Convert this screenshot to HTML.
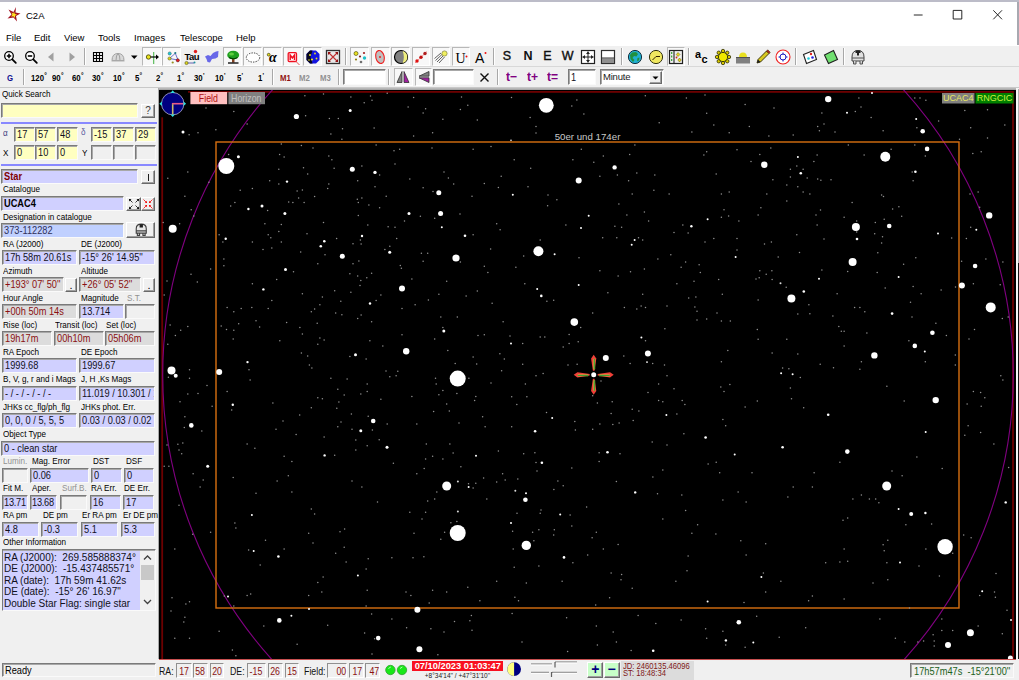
<!DOCTYPE html>
<html><head><meta charset="utf-8"><title>C2A</title>
<style>
*{box-sizing:border-box;margin:0;padding:0}
html,body{width:1019px;height:680px;overflow:hidden;background:#f0f0f0}
body{font-family:"Liberation Sans",sans-serif;font-size:11px;color:#000;position:relative}
.a{position:absolute}
#title{left:0;top:0;width:1019px;height:45px;background:#fff}
#topb{left:0;top:0;width:1019px;height:2.3px;background:#bcbcc8}
#menu span{position:absolute;top:30px;font-size:9.5px;line-height:15px;color:#000;white-space:nowrap}
.tb{left:0;width:1019px;background:#f0f0f0}
.l{position:absolute;font-size:9px;line-height:11px;white-space:nowrap;color:#000;transform:scaleX(.9);transform-origin:0 0}
.g{color:#909090}
.f{position:absolute;height:15px;border:1px solid;border-color:#7a7a7a #fafafa #fafafa #7a7a7a;box-shadow:inset 1px 1px 0 #a8a8a8;background:#d0d0ff;font-size:11px;line-height:13px;padding-left:2px;white-space:nowrap;overflow:hidden;color:#101020}
.f>span{display:inline-block;transform:scaleX(.84);transform-origin:0 0}
.y{background:#ffffc0}
.e{background:#f0f0f0}
.d{background:#dcdcdc;color:#8a1010}
.b{position:absolute;border:1px solid;border-color:#fff #6a6a6a #6a6a6a #fff;box-shadow:inset -1px -1px 0 #a0a0a0;background:#f0f0f0;text-align:center;font-size:11px;line-height:12px}
.p{position:absolute;top:47px;height:19px;background:#f8f8f8;border:1px solid;border-color:#b8b8b8 #fff #fff #b8b8b8}
.sep{position:absolute;width:2px;border-left:1px solid #a8a8a8;border-right:1px solid #fff}
.z{position:absolute;font-weight:bold;font-size:8.4px;line-height:12px;top:72px;white-space:nowrap;transform:scaleX(.93);transform-origin:0 0}
.z sup{font-size:7px;position:relative;top:-3.2px;vertical-align:baseline;line-height:0;margin-left:0.3px}
.sf{position:absolute;top:663px;height:15px;border:1px solid;border-color:#909090 #fff #fff #909090;font-size:11px;line-height:14px;color:#8a1010;text-align:center;background:#f0f0f0;white-space:nowrap}
.sf>span{display:inline-block;transform:scaleX(.8);transform-origin:50% 0}
.sl{position:absolute;top:664px;font-size:11px;line-height:14px;color:#101010;transform:scaleX(.8);transform-origin:0 0;white-space:nowrap}
svg{position:absolute;overflow:visible}
</style></head><body>
<!-- title bar -->
<div id="title" class="a"></div>
<div id="topb" class="a"></div>
<svg style="left:5px;top:6px" width="18" height="18" viewBox="0 0 18 18"><path d="M11 1 L10.5 6.5 L15.5 7.5 L11 10 L12 15.5 L8.5 11.5 L2.5 12.5 L6.5 8.5 L3.5 3.5 L8.5 6 Z" fill="#a01020"/><path d="M9 5.5 L9.8 8 L12 8.6 L10 9.8 L10 12 L8.4 10.2 L6 10.6 L7.4 8.8 L6.4 6.6 L8.4 7.6Z" fill="#ffe820"/></svg>
<div class="a" style="left:26px;top:8px;font-size:9.5px;line-height:15px">C2A</div>
<svg style="left:913px;top:8px" width="100" height="16" viewBox="0 0 100 16"><path d="M0.8 7H9.6 M40.2 2.4H48.8V11H40.2Z M80.3 2.3L89 11.3M89 2.3L80.3 11.3" stroke="#101010" fill="none" stroke-width="0.9"/></svg><div class="a" style="left:1017px;top:2px;width:2px;height:86px;background:#a8a8b0"></div>
<div id="menu">
<span style="left:6px">File</span><span style="left:34px">Edit</span><span style="left:64px">View</span><span style="left:98px">Tools</span><span style="left:134px">Images</span><span style="left:180px">Telescope</span><span style="left:236px">Help</span>
</div>
<!-- toolbars -->
<div class="a tb" style="top:45px;height:22px;border-top:1px solid #fff"></div>
<div class="a tb" style="top:66px;height:21px;border-top:1px solid #d8d8d8"></div>
<div class="a" style="left:0;top:86.5px;width:1019px;height:3px;background:linear-gradient(#d0d0d0,#a0a0a0)"></div>
<div class="p" style="left:142px;width:19.5px"></div>
<div class="p" style="left:162.2px;width:19.100000000000023px"></div>
<div class="p" style="left:222.5px;width:19.099999999999994px"></div>
<div class="p" style="left:243px;width:18.69999999999999px"></div>
<div class="p" style="left:263px;width:18.80000000000001px"></div>
<div class="p" style="left:283px;width:19px"></div>
<div class="p" style="left:303px;width:19px"></div>
<div class="p" style="left:350px;width:19.399999999999977px"></div>
<div class="p" style="left:370.9px;width:18.700000000000045px"></div>
<div class="p" style="left:391px;width:19px"></div>
<div class="p" style="left:411.7px;width:18.5px"></div>
<div class="p" style="left:431.8px;width:18.5px"></div>
<div class="p" style="left:451.8px;width:18.30000000000001px"></div>
<div class="p" style="left:666.5px;width:18.5px"></div>
<svg style="left:2.3000000000000007px;top:48.5px" width="16" height="16" viewBox="0 0 16 16"><circle cx="7" cy="7" r="4.3" fill="#fff" stroke="#000" stroke-width="1.3"/><path d="M10.3 10.3L13.8 13.8" stroke="#000" stroke-width="1.8" stroke-linecap="round"/><path d="M4.8 7H9.2M7 4.8V9.2" stroke="#000" stroke-width="1.5"/></svg>
<svg style="left:22.7px;top:48.5px" width="16" height="16" viewBox="0 0 16 16"><circle cx="7" cy="7" r="4.3" fill="#fff" stroke="#000" stroke-width="1.3"/><path d="M10.3 10.3L13.8 13.8" stroke="#000" stroke-width="1.8" stroke-linecap="round"/><path d="M4.8 7H9.2" stroke="#000" stroke-width="1.6"/></svg>
<svg style="left:42.5px;top:48.5px" width="16" height="16" viewBox="0 0 16 16"><path d="M10.5 3.5V12.5L5 8Z" fill="#a0a0a0"/></svg>
<svg style="left:63.5px;top:48.5px" width="16" height="16" viewBox="0 0 16 16"><path d="M5.5 3.5V12.5L11 8Z" fill="#a0a0a0"/></svg>
<div class="sep" style="left:83.6px;top:48px;height:17px"></div>
<svg style="left:90.0px;top:48.5px" width="16" height="16" viewBox="0 0 16 16"><path d="M3.5 3V13M6.5 3V13M9.5 3V13M12.5 3V13M3 3.5H13M3 6.5H13M3 9.5H13M3 12.5H13" stroke="#000" stroke-width="1.1"/></svg>
<svg style="left:110.0px;top:48.5px" width="16" height="16" viewBox="0 0 16 16"><path d="M2 11.5Q2 4.5 8 4.5Q14 4.5 14 11.5Z" fill="#d8d8d8" stroke="#a0a0a0"/><path d="M6 11.5Q6 6 8 4.5Q10 6 10 11.5" fill="none" stroke="#a0a0a0"/><path d="M1.5 12H14.5" stroke="#b0b0b0"/></svg>
<svg style="left:126.30000000000001px;top:48.5px" width="16" height="16" viewBox="0 0 16 16"><path d="M5 6.5H11.5L8.25 10Z" fill="#000"/></svg>
<svg style="left:145.0px;top:48.5px" width="16" height="16" viewBox="0 0 16 16"><path d="M8.7 3V15" stroke="#50b850" stroke-width="1.1"/><path d="M5 8H13" stroke="#000" stroke-width="1.2"/><path d="M11 5.5L14 8L11 10.5Z" fill="#000"/><circle cx="3.5" cy="8" r="2.2" fill="#e8e020" stroke="#404000" stroke-width="0.8"/></svg>
<svg style="left:165.5px;top:48.5px" width="16" height="16" viewBox="0 0 16 16"><path d="M3.5 9.5L9.3 4.3L12 11L3.5 9.5" stroke="#6060c8" stroke-width="0.9" fill="none"/><circle cx="3.7" cy="4.5" r="1.6" fill="#20c8d8" stroke="#104040" stroke-width="0.4"/><circle cx="9.3" cy="4" r="1.1" fill="#207888"/><circle cx="3.5" cy="9.5" r="1.6" fill="#d8d020" stroke="#303000" stroke-width="0.4"/><circle cx="11.8" cy="11.3" r="1.6" fill="#e02020" stroke="#300000" stroke-width="0.4"/><circle cx="6.7" cy="13.5" r="1.1" fill="#909020"/></svg>
<svg style="left:184.0px;top:48.5px" width="16" height="16" viewBox="0 0 16 16"><text x="0.5" y="11" font-family="Liberation Sans" font-weight="bold" font-size="9.5" fill="#000" letter-spacing="-0.6">Tau</text><path d="M2 14H10" stroke="#4040a0" stroke-width="0.8"/><circle cx="11.5" cy="2.5" r="1.7" fill="#e02020"/><circle cx="2.5" cy="14" r="1.6" fill="#d8d020" stroke="#404000" stroke-width="0.5"/><circle cx="10.5" cy="13.5" r="1" fill="#2090a0"/></svg>
<svg style="left:204.0px;top:48.5px" width="16" height="16" viewBox="0 0 16 16"><path d="M1 7.5L4 6L6.5 7L9 4L12 2.5L14.5 2L14 8L11.5 9.5L8 10L6 13.5L3.5 13L2.5 10Z" fill="#6868e8"/></svg>
<svg style="left:224.7px;top:48.5px" width="16" height="16" viewBox="0 0 16 16"><path d="M7 9H9.5V13.5H7Z" fill="#804020"/><path d="M3 14H13.5" stroke="#000" stroke-width="1.3"/><ellipse cx="8.2" cy="6" rx="6" ry="4.3" fill="#20a020"/><ellipse cx="6.5" cy="5" rx="2.5" ry="1.5" fill="#60d040"/><path d="M4 8.5Q8 11 12.5 8.5" stroke="#004000" stroke-width="1.2" fill="none"/></svg>
<svg style="left:245.0px;top:48.5px" width="16" height="16" viewBox="0 0 16 16"><ellipse cx="8" cy="8.5" rx="6.7" ry="4.6" fill="#fff" stroke="#202020" stroke-width="0.9" stroke-dasharray="1.3 1.2"/></svg>
<svg style="left:265.0px;top:48.5px" width="16" height="16" viewBox="0 0 16 16"><text x="4" y="13.2" font-family="Liberation Serif" font-style="italic" font-weight="bold" font-size="14" fill="#000">&#945;</text><circle cx="3.7" cy="5.7" r="1.4" fill="#e8e020" stroke="#202000" stroke-width="0.6"/></svg>
<svg style="left:284.5px;top:48.5px" width="16" height="16" viewBox="0 0 16 16"><rect x="3.2" y="3.7" width="8.3" height="8.8" rx="1" fill="#fff" stroke="#f01020" stroke-width="1.3"/><path d="M5.2 11V6L7.35 9L9.5 6V11" stroke="#f01020" stroke-width="1.5" fill="none"/><path d="M11 12.5L14.5 16" stroke="#e85050" stroke-width="1"/></svg>
<svg style="left:305.3px;top:48.5px" width="16" height="16" viewBox="0 0 16 16"><path d="M5 1.5H11L14.5 5V11L11 14.5H5L1.5 11V5Z" fill="#1414e0"/><path d="M5 1.5H7.5L5.5 8L7.5 14.5H5L1.5 11V5Z" fill="#080820"/><circle cx="5" cy="6" r="1" fill="#e8e020"/><circle cx="10" cy="4.5" r="0.9" fill="#e8e020"/><circle cx="7" cy="10.5" r="1.1" fill="#e8e020"/><circle cx="11.5" cy="9.5" r="0.9" fill="#e8e020"/><circle cx="4" cy="11" r="0.8" fill="#e8e020"/></svg>
<svg style="left:324.6px;top:48.5px" width="16" height="16" viewBox="0 0 16 16"><rect x="1.5" y="1.5" width="13" height="13" fill="#e8e8e8" stroke="#303030" stroke-width="1.3"/><path d="M3.5 3.5L12.5 12.5M12.5 3.5L3.5 12.5" stroke="#c03030" stroke-width="1.1"/><path d="M3 3H6L3 6ZM13 3H10L13 6ZM3 13H6L3 10ZM13 13H10L13 10Z" fill="#901010"/></svg>
<div class="sep" style="left:344.6px;top:48px;height:17px"></div>
<svg style="left:351.8px;top:48.5px" width="16" height="16" viewBox="0 0 16 16"><circle cx="4" cy="4.5" r="2" fill="#e8e020" stroke="#404000" stroke-width="0.6"/><circle cx="12" cy="4" r="1.1" fill="#a02020"/><circle cx="8" cy="7.5" r="1.1" fill="#802020"/><circle cx="12.5" cy="9" r="1.7" fill="#20c0c8"/><circle cx="4" cy="10.5" r="1.1" fill="#908010"/><circle cx="9" cy="13" r="1.3" fill="#707070"/></svg>
<svg style="left:372.2px;top:48.5px" width="16" height="16" viewBox="0 0 16 16"><ellipse cx="8" cy="8" rx="4.2" ry="6.6" transform="rotate(-14 8 8)" fill="#c0c0c0" stroke="#f02020" stroke-width="1.1"/><circle cx="8" cy="8" r="1" fill="#f02020"/></svg>
<svg style="left:392.5px;top:48.5px" width="16" height="16" viewBox="0 0 16 16"><circle cx="8" cy="8" r="6.5" fill="#808080" stroke="#000" stroke-width="1.2"/><path d="M9.6 1.9A6.3 6.3 0 0 1 9.6 14.1A16 16 0 0 0 9.6 1.9Z" fill="#f0f080"/></svg>
<svg style="left:413.0px;top:48.5px" width="16" height="16" viewBox="0 0 16 16"><path d="M2 14L14 2.5" stroke="#f08080" stroke-width="0.9"/><circle cx="4" cy="12" r="1.7" fill="#e01010"/><circle cx="8" cy="8.2" r="1.7" fill="#c01010"/><circle cx="12" cy="4.5" r="1.7" fill="#b02020"/></svg>
<svg style="left:433.0px;top:48.5px" width="16" height="16" viewBox="0 0 16 16"><path d="M8 4L1.5 9.5M9.5 5L2.5 11.5M10.5 6.5L4 13M11.5 8L6 14" stroke="#505050" stroke-width="0.9"/><circle cx="11.5" cy="4.5" r="2.6" fill="#f0f060" stroke="#808040" stroke-width="0.7"/></svg>
<svg style="left:453.0px;top:48.5px" width="16" height="16" viewBox="0 0 16 16"><text x="2.5" y="13.5" font-family="Liberation Serif" font-size="14" fill="#000">U</text><circle cx="13.5" cy="7.5" r="1" fill="#f01010"/></svg>
<svg style="left:473.0px;top:48.5px" width="16" height="16" viewBox="0 0 16 16"><text x="2" y="13.5" font-family="Liberation Sans" font-size="14" fill="#000">A</text><circle cx="12.5" cy="4" r="1" fill="#f01010"/></svg>
<div class="sep" style="left:493px;top:48px;height:17px"></div>
<div class="a" style="left:497px;top:49px;width:20px;text-align:center;font-size:12.5px;line-height:15px;-webkit-text-stroke:0.4px #101010;color:#101010">S</div>
<div class="a" style="left:518px;top:49px;width:20px;text-align:center;font-size:12.5px;line-height:15px;font-weight:bold;color:#101010">N</div>
<div class="a" style="left:537.5px;top:49px;width:20px;text-align:center;font-size:12.5px;line-height:15px;-webkit-text-stroke:0.4px #101010;color:#101010">E</div>
<div class="a" style="left:557.7px;top:49px;width:20px;text-align:center;font-size:12.5px;line-height:15px;-webkit-text-stroke:0.4px #101010;color:#101010">W</div>
<svg style="left:579.7px;top:48.5px" width="16" height="16" viewBox="0 0 16 16"><rect x="1.5" y="1.5" width="13" height="13" fill="#fff" stroke="#202020" stroke-width="1.2"/><path d="M8 2.5V13.5M2.5 8H13.5" stroke="#202020" stroke-width="1"/><path d="M8 2.5L6 5H10ZM8 13.5L6 11H10ZM2.5 8L5 6V10ZM13.5 8L11 6V10Z" fill="#202020"/></svg>
<svg style="left:599.7px;top:48.5px" width="16" height="16" viewBox="0 0 16 16"><rect x="1.5" y="1.5" width="13" height="13" fill="#fff" stroke="#303030" stroke-width="1.2"/><rect x="2" y="9.5" width="12" height="4.5" fill="#909090"/><path d="M2 9H14" stroke="#303030" stroke-width="1"/></svg>
<div class="sep" style="left:620.7px;top:48px;height:17px"></div>
<svg style="left:627.0px;top:48.5px" width="16" height="16" viewBox="0 0 16 16"><circle cx="8" cy="8" r="6.6" fill="#20b0d0" stroke="#103040" stroke-width="1"/><path d="M5 3.5L9 3L11 5L9.5 7.5L7 7L5.5 9L7.5 11L6 13L3.5 10L3 6Z" fill="#209040"/><path d="M10.5 9L12.5 8.5L12 11.5L10 12Z" fill="#209040"/></svg>
<svg style="left:648.0px;top:48.5px" width="16" height="16" viewBox="0 0 16 16"><circle cx="8" cy="8" r="6.6" fill="#f0e860" stroke="#303010" stroke-width="1"/><path d="M4.5 11L8 7.5H12" stroke="#302000" stroke-width="1" fill="none"/></svg>
<svg style="left:668.0px;top:48.5px" width="16" height="16" viewBox="0 0 16 16"><rect x="1.5" y="1.5" width="13" height="13" fill="#f0f0f0" stroke="#202020" stroke-width="1.2"/><path d="M6 1.5V14.5" stroke="#202020" stroke-width="1.1"/><path d="M3.7 3V13" stroke="#30a030" stroke-width="1.2" stroke-dasharray="2 1.5"/><path d="M10 3.5L12 5.5L10 7.5L8.3 5.5ZM11.5 9L13.3 11L11.5 13L9.8 11Z" fill="#e8d820" stroke="#605000" stroke-width="0.5"/><circle cx="8.5" cy="8.5" r="0.9" fill="#d02020"/></svg>
<div class="sep" style="left:688.3px;top:48px;height:17px"></div>
<svg style="left:694.0px;top:48.5px" width="16" height="16" viewBox="0 0 16 16"><text x="1" y="9" font-family="Liberation Sans" font-weight="bold" font-size="11" fill="#000">a</text><text x="7.5" y="14" font-family="Liberation Sans" font-weight="bold" font-size="11" fill="#000">c</text></svg>
<svg style="left:715.3px;top:48.5px" width="16" height="16" viewBox="0 0 16 16"><circle cx="14.00" cy="8.00" r="1.7" fill="#d8c800" stroke="#303000" stroke-width="0.8"/><circle cx="12.24" cy="12.24" r="1.7" fill="#d8c800" stroke="#303000" stroke-width="0.8"/><circle cx="8.00" cy="14.00" r="1.7" fill="#d8c800" stroke="#303000" stroke-width="0.8"/><circle cx="3.76" cy="12.24" r="1.7" fill="#d8c800" stroke="#303000" stroke-width="0.8"/><circle cx="2.00" cy="8.00" r="1.7" fill="#d8c800" stroke="#303000" stroke-width="0.8"/><circle cx="3.76" cy="3.76" r="1.7" fill="#d8c800" stroke="#303000" stroke-width="0.8"/><circle cx="8.00" cy="2.00" r="1.7" fill="#d8c800" stroke="#303000" stroke-width="0.8"/><circle cx="12.24" cy="3.76" r="1.7" fill="#d8c800" stroke="#303000" stroke-width="0.8"/><circle cx="8" cy="8" r="4.6" fill="#f0e800" stroke="#303000" stroke-width="0.9"/></svg>
<svg style="left:735.0px;top:48.5px" width="16" height="16" viewBox="0 0 16 16"><path d="M4 8.5Q4 3.5 8 3.5Q12 3.5 12 8.5Z" fill="#e8e020"/><rect x="1" y="8.5" width="14" height="6" fill="#808080"/><path d="M1 8.5H15" stroke="#505050"/></svg>
<svg style="left:755.0px;top:48.5px" width="16" height="16" viewBox="0 0 16 16"><path d="M2 14L3 10.5L11.5 2L14 4.5L5.5 13Z" fill="#d8c820" stroke="#302800" stroke-width="0.9"/><path d="M11.5 2L12.7 0.8L15.2 3.3L14 4.5Z" fill="#c02020" stroke="#302800" stroke-width="0.6"/><path d="M2 14L3 10.5L5.5 13Z" fill="#202020"/></svg>
<svg style="left:775.4px;top:48.5px" width="16" height="16" viewBox="0 0 16 16"><circle cx="8" cy="8" r="7" fill="#fff" stroke="#f02020" stroke-width="1.1"/><circle cx="8" cy="8" r="3" fill="none" stroke="#2020c0" stroke-width="1"/><path d="M8 3.5V5.5M8 10.5V12.5M3.5 8H5.5M10.5 8H12.5" stroke="#2020c0" stroke-width="1"/></svg>
<div class="sep" style="left:795.4px;top:48px;height:17px"></div>
<svg style="left:802.0px;top:48.5px" width="16" height="16" viewBox="0 0 16 16"><path d="M1.5 5.5L11.5 1.5L14.5 10.5L4.5 14.5Z" fill="#fff" stroke="#202020" stroke-width="1.1"/><circle cx="6.5" cy="9.5" r="1.3" fill="#20d0e0"/><circle cx="10.5" cy="8.5" r="1.3" fill="#2020e0"/><circle cx="9" cy="5" r="1.2" fill="#e02020"/></svg>
<svg style="left:822.5px;top:48.5px" width="16" height="16" viewBox="0 0 16 16"><path d="M1.5 6L10.5 1.5L14.5 10.5L5.5 14.5Z" fill="#70e070" stroke="#202020" stroke-width="1.1"/></svg>
<div class="sep" style="left:842.5px;top:48px;height:17px"></div>
<svg style="left:849.6px;top:48.5px" width="16" height="16" viewBox="0 0 16 16"><path d="M2 8Q2 1.5 8 1.5Q14 1.5 14 8V12H2Z" fill="#e0e0e0" stroke="#404040" stroke-width="1"/><rect x="5.5" y="1.5" width="5" height="2.5" fill="#202020"/><rect x="7" y="3" width="2" height="3.5" fill="#202020"/><path d="M2 9H14M3.5 12V15H6V12M10 12V15H12.5V12" stroke="#505050" fill="#d0d0d0"/></svg>
<div class="z" style="left:6.5px;color:#101090">G</div>
<div class="sep" style="left:23.2px;top:69px;height:16px"></div>
<div class="z" style="left:30.5px">120<sup>&deg;</sup></div>
<div class="z" style="left:51.5px">90<sup>&deg;</sup></div>
<div class="z" style="left:71.5px">60<sup>&deg;</sup></div>
<div class="z" style="left:92px">30<sup>&deg;</sup></div>
<div class="z" style="left:112.5px">10<sup>&deg;</sup></div>
<div class="z" style="left:135px">5<sup>&deg;</sup></div>
<div class="z" style="left:155.5px">2<sup>&deg;</sup></div>
<div class="z" style="left:176.5px">1<sup>&deg;</sup></div>
<div class="z" style="left:193.5px">30<sup>'</sup></div>
<div class="z" style="left:214.5px">10<sup>'</sup></div>
<div class="z" style="left:236.5px">5<sup>'</sup></div>
<div class="z" style="left:257.5px">1<sup>'</sup></div>
<div class="sep" style="left:271.6px;top:69px;height:16px"></div>
<div class="z" style="left:279.5px;color:#901010;letter-spacing:0">M1</div>
<div class="z" style="left:299px;color:#909090;letter-spacing:0">M2</div>
<div class="z" style="left:319.5px;color:#909090;letter-spacing:0">M3</div>
<div class="sep" style="left:338.2px;top:69px;height:16px"></div>
<div class="f" style="left:343px;top:69px;width:43px;height:16px;background:#fff"></div>
<div class="sep" style="left:388.3px;top:69px;height:16px"></div>
<div class="p" style="left:393.5px;width:19px;top:68px;height:18px"></div>
<div class="p" style="left:414.5px;width:17.5px;top:68px;height:18px"></div>
<svg style="left:396px;top:70px" width="14" height="14" viewBox="0 0 14 14"><path d="M6 1.5V12.5H1Z" fill="#808080" stroke="#303030" stroke-width="0.8"/><path d="M8 1.5V12.5H13Z" fill="#a020a0" stroke="#303030" stroke-width="0.8"/></svg>
<svg style="left:417px;top:70px" width="14" height="14" viewBox="0 0 14 14"><path d="M12 6.2H2L12 1.5Z" fill="#808080" stroke="#303030" stroke-width="0.8"/><path d="M12 7.8H2L12 12.5Z" fill="#a020a0" stroke="#303030" stroke-width="0.8"/></svg>
<div class="f" style="left:433px;top:69px;width:41px;height:16px;background:#fff"></div>
<svg style="left:479px;top:72px" width="11" height="11" viewBox="0 0 11 11"><path d="M1.5 1.5L9.5 9.5M9.5 1.5L1.5 9.5" stroke="#101010" stroke-width="1.4"/></svg>
<div class="sep" style="left:497.4px;top:69px;height:16px"></div>
<div class="z" style="left:506px;color:#800080;font-size:13px;top:70px;line-height:14px;letter-spacing:0">t&minus;</div>
<div class="z" style="left:526.5px;color:#800080;font-size:13px;top:70px;line-height:14px;letter-spacing:0">t+</div>
<div class="z" style="left:546.5px;color:#800080;font-size:13px;top:70px;line-height:14px;letter-spacing:0">t=</div>
<div class="f" style="left:568px;top:69px;width:28px;height:16px;background:#fff;font-size:11px;line-height:14px"><span>1</span></div>
<div class="f" style="left:600px;top:69px;width:64px;height:16px;background:#fff;font-size:9.5px;line-height:14px;letter-spacing:-0.2px;color:#202020">Minute</div>
<div class="b" style="left:649px;top:71px;width:13px;height:13px"><svg style="left:2px;top:4px" width="7" height="4" viewBox="0 0 7 4"><path d="M0.5 0.5H6.5L3.5 3.5Z" fill="#000"/></svg></div>
<div class="a" style="left:0;top:659px;width:1019px;height:21px;background:#f0f0f0"></div>
<div class="a" style="left:159px;top:658.7px;width:858px;height:1.3px;background:#c85050"></div>
<!-- left panel -->
<div class="a" style="left:0;top:88px;width:158px;height:572px;background:#f0f0f0"></div>
<div class="a" style="left:157.5px;top:88px;width:1.5px;height:571px;background:#a8a8a8"></div>
<div class="l " style="left:2px;top:89px">Quick Search</div>
<div class="f y" style="left:1px;top:103px;width:137px;height:15px;"><span></span></div>
<div class="b" style="left:141px;top:104px;width:14px;height:14px;color:#404040;font-size:10px;line-height:11px">?</div>
<div class="a" style="left:1px;top:122px;width:156px;height:2px;background:#8888ff"></div>
<div class="l" style="left:3px;top:128px;font-size:9px;color:#404080">&alpha;</div>
<div class="f y" style="left:14px;top:127px;width:21px;height:15px;"><span>17</span></div>
<div class="f y" style="left:35px;top:127px;width:21px;height:15px;"><span>57</span></div>
<div class="f y" style="left:57px;top:127px;width:21px;height:15px;"><span>48</span></div>
<div class="l" style="left:81px;top:127px;font-size:9px;color:#6060a0">&delta;</div>
<div class="f y" style="left:91px;top:127px;width:21px;height:15px;"><span>-15</span></div>
<div class="f y" style="left:113px;top:127px;width:21px;height:15px;"><span>37</span></div>
<div class="f y" style="left:135px;top:127px;width:21px;height:15px;"><span>29</span></div>
<div class="l " style="left:3px;top:148px">X</div>
<div class="f y" style="left:14px;top:145px;width:21px;height:15px;"><span>0</span></div>
<div class="f y" style="left:35px;top:145px;width:21px;height:15px;"><span>10</span></div>
<div class="f y" style="left:57px;top:145px;width:21px;height:15px;"><span>0</span></div>
<div class="l " style="left:82px;top:148px">Y</div>
<div class="f e" style="left:91px;top:145px;width:21px;height:15px;"><span></span></div>
<div class="f e" style="left:113px;top:145px;width:21px;height:15px;"><span></span></div>
<div class="f e" style="left:135px;top:145px;width:21px;height:15px;"><span></span></div>
<div class="a" style="left:1px;top:164px;width:156px;height:2px;background:#8888ff"></div>
<div class="f " style="left:1px;top:169px;width:137px;height:15px;font-weight:bold;color:#800000"><span>Star</span></div>
<div class="b" style="left:141px;top:170px;width:14px;height:14px;"><div style="position:absolute;left:5.5px;top:2.5px;width:1px;height:7px;background:#202020"></div></div>
<div class="l " style="left:3px;top:184px">Catalogue</div>
<div class="f " style="left:1px;top:196px;width:123px;height:15px;font-weight:bold;color:#000"><span>UCAC4</span></div>
<div class="b" style="left:126px;top:197px;width:15px;height:14px;"><svg style="left:1px;top:0" width="12" height="12" viewBox="0 0 12 12"><path d="M1.5 1.5L4.5 4.5M10.5 1.5L7.5 4.5M1.5 10.5L4.5 7.5M10.5 10.5L7.5 7.5" stroke="#202020" stroke-width="0.9" fill="none"/><path d="M1 1H3.5L1 3.5ZM11 1H8.5L11 3.5ZM1 11H3.5L1 8.5ZM11 11H8.5L11 8.5Z" fill="#101010"/></svg></div>
<div class="b" style="left:141px;top:197px;width:14px;height:14px;"><svg style="left:0;top:0" width="12" height="12" viewBox="0 0 12 12"><path d="M1.5 1.5L4.5 4.5M10.5 1.5L7.5 4.5M1.5 10.5L4.5 7.5M10.5 10.5L7.5 7.5" stroke="#f02020" stroke-width="0.9" fill="none"/><path d="M5 5H2.8L5 2.8ZM7 5H9.2L7 2.8ZM5 7H2.8L5 9.2ZM7 7H9.2L7 9.2Z" fill="#f01010"/></svg></div>
<div class="l " style="left:3px;top:212px">Designation in catalogue</div>
<div class="f " style="left:1px;top:223px;width:123px;height:15px;background:#c0d0ff;color:#303058"><span>373-112282</span></div>
<div class="b" style="left:126px;top:222px;width:29px;height:16px;"><svg style="left:7px;top:0px" width="14.5" height="13.5" viewBox="0 0 13 12"><path d="M2 5Q2 1 6.5 1Q11 1 11 5V9H2Z" fill="#e8e8e8" stroke="#404040"/><rect x="5" y="1" width="3" height="3" fill="#202020"/><path d="M2 7H11M3 9V11H5V9M8 9V11H10V9" stroke="#404040" fill="none"/></svg></div>
<div class="l " style="left:3px;top:239px">RA (J2000)</div>
<div class="l " style="left:81px;top:239px">DE (J2000)</div>
<div class="f " style="left:2px;top:250px;width:75px;height:15px;"><span>17h 58m 20.61s</span></div>
<div class="f " style="left:79px;top:250px;width:76px;height:15px;"><span>-15&deg; 26' 14.95''</span></div>
<div class="l " style="left:3px;top:266px">Azimuth</div>
<div class="l " style="left:81px;top:266px">Altitude</div>
<div class="f d" style="left:2px;top:277px;width:62px;height:15px;"><span>+193&deg; 07' 50''</span></div>
<div class="b" style="left:65px;top:278px;width:12px;height:14px;">.</div>
<div class="f d" style="left:79px;top:277px;width:62px;height:15px;"><span>+26&deg; 05' 52''</span></div>
<div class="b" style="left:143px;top:278px;width:12px;height:14px;">.</div>
<div class="l " style="left:3px;top:293px">Hour Angle</div>
<div class="l " style="left:81px;top:293px">Magnitude</div>
<div class="l g" style="left:127px;top:293px">S.T.</div>
<div class="f d" style="left:2px;top:304px;width:75px;height:15px;"><span>+00h 50m 14s</span></div>
<div class="f " style="left:79px;top:304px;width:45px;height:15px;"><span>13.714</span></div>
<div class="f e" style="left:125px;top:304px;width:30px;height:15px;"><span></span></div>
<div class="l " style="left:3px;top:320px">Rise (loc)</div>
<div class="l " style="left:55px;top:320px">Transit (loc)</div>
<div class="l " style="left:106px;top:320px">Set (loc)</div>
<div class="f d" style="left:2px;top:331px;width:50px;height:15px;"><span>19h17m</span></div>
<div class="f d" style="left:54px;top:331px;width:50px;height:15px;"><span>00h10m</span></div>
<div class="f d" style="left:105px;top:331px;width:50px;height:15px;"><span>05h06m</span></div>
<div class="l " style="left:3px;top:347px">RA Epoch</div>
<div class="l " style="left:81px;top:347px">DE Epoch</div>
<div class="f " style="left:2px;top:358px;width:75px;height:15px;"><span>1999.68</span></div>
<div class="f " style="left:79px;top:358px;width:76px;height:15px;"><span>1999.67</span></div>
<div class="l " style="left:3px;top:374px">B, V, g, r and i Mags</div>
<div class="l " style="left:81px;top:374px">J, H ,Ks Mags</div>
<div class="f " style="left:2px;top:386px;width:75px;height:15px;"><span>- / - / - / - / -</span></div>
<div class="f " style="left:79px;top:386px;width:76px;height:15px;"><span>11.019 / 10.301 / 10.1</span></div>
<div class="l " style="left:3px;top:402px">JHKs cc_flg/ph_flg</div>
<div class="l " style="left:81px;top:402px">JHKs phot. Err.</div>
<div class="f " style="left:2px;top:413px;width:75px;height:15px;"><span>0, 0, 0 / 5, 5, 5</span></div>
<div class="f " style="left:79px;top:413px;width:76px;height:15px;"><span>0.03 / 0.03 / 0.02</span></div>
<div class="l " style="left:3px;top:429px">Object Type</div>
<div class="f " style="left:1px;top:441px;width:154px;height:15px;"><span>0 - clean star</span></div>
<div class="l g" style="left:3px;top:456px">Lumin.</div>
<div class="l " style="left:32px;top:456px">Mag. Error</div>
<div class="l " style="left:93px;top:456px">DST</div>
<div class="l " style="left:126px;top:456px">DSF</div>
<div class="f e" style="left:2px;top:468px;width:26px;height:15px;"><span></span></div>
<div class="f " style="left:30px;top:468px;width:59px;height:15px;"><span>0.06</span></div>
<div class="f " style="left:91px;top:468px;width:31px;height:15px;"><span>0</span></div>
<div class="f " style="left:124px;top:468px;width:30px;height:15px;"><span>0</span></div>
<div class="l " style="left:3px;top:483px">Fit M.</div>
<div class="l " style="left:32px;top:483px">Aper.</div>
<div class="l g" style="left:62px;top:483px">Surf.B.</div>
<div class="l " style="left:91px;top:483px">RA Err.</div>
<div class="l " style="left:124px;top:483px">DE Err.</div>
<div class="f " style="left:2px;top:495px;width:26px;height:15px;padding-left:1px;letter-spacing:-0.3px"><span>13.71</span></div>
<div class="f " style="left:30px;top:495px;width:27px;height:15px;padding-left:1px;letter-spacing:-0.3px"><span>13.68</span></div>
<div class="f e" style="left:60px;top:495px;width:27px;height:15px;"><span></span></div>
<div class="f " style="left:90px;top:495px;width:31px;height:15px;"><span>16</span></div>
<div class="f " style="left:123px;top:495px;width:31px;height:15px;"><span>17</span></div>
<div class="l " style="left:3px;top:510px">RA pm</div>
<div class="l " style="left:43px;top:510px">DE pm</div>
<div class="l " style="left:82px;top:510px">Er RA pm</div>
<div class="l " style="left:123px;top:510px">Er DE pm</div>
<div class="f " style="left:2px;top:522px;width:37px;height:15px;"><span>4.8</span></div>
<div class="f " style="left:41px;top:522px;width:37px;height:15px;"><span>-0.3</span></div>
<div class="f " style="left:81px;top:522px;width:37px;height:15px;"><span>5.1</span></div>
<div class="f " style="left:121px;top:522px;width:34px;height:15px;"><span>5.3</span></div>
<div class="l " style="left:3px;top:537px">Other Information</div>
<div class="f" style="left:2px;top:549px;width:154px;height:62px;background:#f0f0f0"></div>
<div class="a" style="left:3px;top:551px;width:137px;height:59px;background:#d0d0ff;font-size:10px;line-height:11.45px;padding-left:1px;padding-top:1px;color:#101020;white-space:pre;overflow:hidden">RA (J2000):  269.585888374&deg;
DE (J2000):  -15.437485571&deg;
RA (date):  17h 59m 41.62s
DE (date):  -15&deg; 26' 16.97"
Double Star Flag: single star</div>
<div class="a" style="left:141px;top:565px;width:13px;height:15px;background:#c8c8c8"></div>
<svg style="left:143px;top:554px" width="9" height="52" viewBox="0 0 9 52"><path d="M1 5.5L4.5 2L8 5.5M1 46L4.5 49.5L8 46" stroke="#404040" stroke-width="1.3" fill="none"/></svg>
<div class="f" style="left:2px;top:663px;width:154px;height:14px;background:#f0f0f0;font-size:11px;line-height:12px;color:#000"><span>Ready</span></div>
<!-- map -->
<div class="a" style="left:159px;top:89.5px;width:856.7px;height:569.5px;background:#000;overflow:hidden">
<svg style="left:-159px;top:-89.5px" width="1019" height="680" viewBox="0 0 1019 680">
<rect x="162.2" y="91.9" width="850.8" height="568" fill="none" stroke="#6c0000" stroke-width="1.8"/>
<circle cx="588" cy="375" r="425.3" fill="none" stroke="#800080" stroke-width="1.1"/>
<rect x="216" y="142" width="743" height="466" fill="none" stroke="#d87010" stroke-width="1.4"/>
<g fill="#909090"><circle cx="206.0" cy="108.0" r="0.75"/><circle cx="233.8" cy="111.6" r="0.75"/><circle cx="304.9" cy="95.8" r="0.75"/><circle cx="323.5" cy="93.9" r="0.75"/><circle cx="350.9" cy="96.9" r="0.75"/><circle cx="370.5" cy="96.0" r="0.75"/><circle cx="364.2" cy="102.8" r="0.75"/><circle cx="372.0" cy="100.2" r="0.75"/><circle cx="305.6" cy="115.8" r="0.75"/><circle cx="329.4" cy="118.6" r="0.75"/><circle cx="338.3" cy="118.6" r="0.75"/><circle cx="247.1" cy="123.9" r="0.75"/><circle cx="215.9" cy="129.8" r="0.75"/><circle cx="198.0" cy="132.7" r="0.75"/><circle cx="189.1" cy="134.8" r="0.75"/><circle cx="342.5" cy="128.7" r="0.75"/><circle cx="330.9" cy="134.0" r="0.75"/><circle cx="341.9" cy="139.3" r="0.75"/><circle cx="374.1" cy="128.1" r="0.75"/><circle cx="281.3" cy="143.9" r="0.75"/><circle cx="301.4" cy="145.6" r="0.75"/><circle cx="313.0" cy="148.1" r="0.75"/><circle cx="279.6" cy="154.5" r="0.75"/><circle cx="284.1" cy="157.0" r="0.75"/><circle cx="328.8" cy="155.9" r="0.75"/><circle cx="331.9" cy="159.7" r="0.75"/><circle cx="228.6" cy="154.5" r="0.75"/><circle cx="303.5" cy="167.7" r="0.75"/><circle cx="278.8" cy="169.2" r="0.75"/><circle cx="307.7" cy="173.9" r="0.75"/><circle cx="334.1" cy="168.2" r="0.75"/><circle cx="361.9" cy="166.1" r="0.75"/><circle cx="187.8" cy="172.0" r="0.75"/><circle cx="167.8" cy="178.3" r="0.75"/><circle cx="208.9" cy="182.3" r="0.75"/><circle cx="269.7" cy="180.8" r="0.75"/><circle cx="278.8" cy="184.0" r="0.75"/><circle cx="357.7" cy="180.8" r="0.75"/><circle cx="328.8" cy="184.0" r="0.75"/><circle cx="327.7" cy="188.6" r="0.75"/><circle cx="240.2" cy="190.3" r="0.75"/><circle cx="252.4" cy="188.6" r="0.75"/><circle cx="297.1" cy="191.0" r="0.75"/><circle cx="302.4" cy="189.9" r="0.75"/><circle cx="184.9" cy="196.2" r="0.75"/><circle cx="314.6" cy="196.6" r="0.75"/><circle cx="298.6" cy="198.1" r="0.75"/><circle cx="288.7" cy="201.9" r="0.75"/><circle cx="292.9" cy="202.6" r="0.75"/><circle cx="304.1" cy="202.6" r="0.75"/><circle cx="361.9" cy="198.1" r="0.75"/><circle cx="357.3" cy="199.2" r="0.75"/><circle cx="358.3" cy="202.6" r="0.75"/><circle cx="368.9" cy="205.1" r="0.75"/><circle cx="234.9" cy="202.6" r="0.75"/><circle cx="230.7" cy="206.1" r="0.75"/><circle cx="267.6" cy="210.4" r="0.75"/><circle cx="191.2" cy="209.7" r="0.75"/><circle cx="193.8" cy="216.1" r="0.75"/><circle cx="358.3" cy="215.6" r="0.75"/><circle cx="179.6" cy="223.7" r="0.75"/><circle cx="163.2" cy="222.4" r="0.75"/><circle cx="264.9" cy="223.7" r="0.75"/><circle cx="281.3" cy="224.5" r="0.75"/><circle cx="323.5" cy="222.4" r="0.75"/><circle cx="367.8" cy="225.1" r="0.75"/><circle cx="387.2" cy="93.3" r="0.75"/><circle cx="413.6" cy="97.5" r="0.75"/><circle cx="461.5" cy="96.9" r="0.75"/><circle cx="511.5" cy="97.5" r="0.75"/><circle cx="576.9" cy="100.0" r="0.75"/><circle cx="408.1" cy="107.0" r="0.75"/><circle cx="425.6" cy="108.7" r="0.75"/><circle cx="423.1" cy="112.9" r="0.75"/><circle cx="460.4" cy="109.5" r="0.75"/><circle cx="467.8" cy="105.3" r="0.75"/><circle cx="442.9" cy="119.2" r="0.75"/><circle cx="477.3" cy="120.1" r="0.75"/><circle cx="530.1" cy="117.5" r="0.75"/><circle cx="571.8" cy="105.9" r="0.75"/><circle cx="583.9" cy="113.9" r="0.75"/><circle cx="536.0" cy="126.4" r="0.75"/><circle cx="536.0" cy="132.9" r="0.75"/><circle cx="432.6" cy="132.7" r="0.75"/><circle cx="413.6" cy="136.1" r="0.75"/><circle cx="376.1" cy="145.0" r="0.75"/><circle cx="394.0" cy="150.7" r="0.75"/><circle cx="399.7" cy="149.2" r="0.75"/><circle cx="432.0" cy="148.1" r="0.75"/><circle cx="473.1" cy="149.2" r="0.75"/><circle cx="491.0" cy="146.6" r="0.75"/><circle cx="581.3" cy="149.2" r="0.75"/><circle cx="514.2" cy="159.7" r="0.75"/><circle cx="572.9" cy="159.7" r="0.75"/><circle cx="395.0" cy="163.9" r="0.75"/><circle cx="530.7" cy="168.2" r="0.75"/><circle cx="379.6" cy="175.1" r="0.75"/><circle cx="444.0" cy="172.0" r="0.75"/><circle cx="501.2" cy="176.2" r="0.75"/><circle cx="409.8" cy="179.1" r="0.75"/><circle cx="448.4" cy="178.1" r="0.75"/><circle cx="453.7" cy="184.0" r="0.75"/><circle cx="484.3" cy="183.4" r="0.75"/><circle cx="498.4" cy="187.6" r="0.75"/><circle cx="528.0" cy="186.7" r="0.75"/><circle cx="375.0" cy="186.7" r="0.75"/><circle cx="423.1" cy="187.8" r="0.75"/><circle cx="433.0" cy="191.4" r="0.75"/><circle cx="386.2" cy="196.2" r="0.75"/><circle cx="472.0" cy="196.2" r="0.75"/><circle cx="548.0" cy="195.0" r="0.75"/><circle cx="556.9" cy="199.8" r="0.75"/><circle cx="547.6" cy="205.7" r="0.75"/><circle cx="379.6" cy="207.8" r="0.75"/><circle cx="460.0" cy="213.9" r="0.75"/><circle cx="420.4" cy="216.3" r="0.75"/><circle cx="434.7" cy="218.2" r="0.75"/><circle cx="404.5" cy="220.9" r="0.75"/><circle cx="388.1" cy="226.8" r="0.75"/><circle cx="395.0" cy="227.2" r="0.75"/><circle cx="496.7" cy="223.7" r="0.75"/><circle cx="500.1" cy="229.8" r="0.75"/><circle cx="565.9" cy="225.1" r="0.75"/><circle cx="645.3" cy="95.8" r="0.75"/><circle cx="686.4" cy="98.1" r="0.75"/><circle cx="705.0" cy="95.0" r="0.75"/><circle cx="745.1" cy="104.5" r="0.75"/><circle cx="774.0" cy="108.0" r="0.75"/><circle cx="706.7" cy="113.3" r="0.75"/><circle cx="659.2" cy="122.8" r="0.75"/><circle cx="713.8" cy="124.9" r="0.75"/><circle cx="749.3" cy="126.4" r="0.75"/><circle cx="691.9" cy="131.9" r="0.75"/><circle cx="729.2" cy="132.7" r="0.75"/><circle cx="768.9" cy="136.1" r="0.75"/><circle cx="793.2" cy="135.0" r="0.75"/><circle cx="634.9" cy="145.0" r="0.75"/><circle cx="770.8" cy="148.1" r="0.75"/><circle cx="737.0" cy="149.8" r="0.75"/><circle cx="706.7" cy="151.7" r="0.75"/><circle cx="703.9" cy="155.1" r="0.75"/><circle cx="629.7" cy="154.5" r="0.75"/><circle cx="603.3" cy="156.1" r="0.75"/><circle cx="759.8" cy="154.5" r="0.75"/><circle cx="751.0" cy="161.4" r="0.75"/><circle cx="593.8" cy="162.3" r="0.75"/><circle cx="796.8" cy="166.1" r="0.75"/><circle cx="790.4" cy="169.2" r="0.75"/><circle cx="803.1" cy="169.2" r="0.75"/><circle cx="599.9" cy="176.2" r="0.75"/><circle cx="617.4" cy="175.1" r="0.75"/><circle cx="636.8" cy="173.0" r="0.75"/><circle cx="654.8" cy="175.1" r="0.75"/><circle cx="716.2" cy="173.9" r="0.75"/><circle cx="790.4" cy="177.0" r="0.75"/><circle cx="772.9" cy="179.8" r="0.75"/><circle cx="628.6" cy="180.8" r="0.75"/><circle cx="786.8" cy="185.0" r="0.75"/><circle cx="797.8" cy="186.7" r="0.75"/><circle cx="803.1" cy="192.0" r="0.75"/><circle cx="653.9" cy="190.3" r="0.75"/><circle cx="632.2" cy="193.9" r="0.75"/><circle cx="669.1" cy="193.9" r="0.75"/><circle cx="721.4" cy="193.9" r="0.75"/><circle cx="729.2" cy="192.0" r="0.75"/><circle cx="766.8" cy="193.9" r="0.75"/><circle cx="786.8" cy="200.9" r="0.75"/><circle cx="618.9" cy="204.0" r="0.75"/><circle cx="760.9" cy="207.8" r="0.75"/><circle cx="724.0" cy="209.7" r="0.75"/><circle cx="644.4" cy="212.1" r="0.75"/><circle cx="626.9" cy="215.0" r="0.75"/><circle cx="758.1" cy="215.0" r="0.75"/><circle cx="728.6" cy="216.1" r="0.75"/><circle cx="721.4" cy="217.3" r="0.75"/><circle cx="648.6" cy="220.9" r="0.75"/><circle cx="738.9" cy="220.9" r="0.75"/><circle cx="682.8" cy="225.1" r="0.75"/><circle cx="614.9" cy="226.2" r="0.75"/><circle cx="621.6" cy="227.2" r="0.75"/><circle cx="858.9" cy="98.1" r="0.75"/><circle cx="914.8" cy="98.1" r="0.75"/><circle cx="920.0" cy="98.1" r="0.75"/><circle cx="925.9" cy="100.2" r="0.75"/><circle cx="861.0" cy="107.0" r="0.75"/><circle cx="821.9" cy="112.9" r="0.75"/><circle cx="855.3" cy="111.6" r="0.75"/><circle cx="871.1" cy="117.5" r="0.75"/><circle cx="964.8" cy="110.6" r="0.75"/><circle cx="987.5" cy="109.7" r="0.75"/><circle cx="938.6" cy="121.1" r="0.75"/><circle cx="824.0" cy="123.9" r="0.75"/><circle cx="817.7" cy="126.4" r="0.75"/><circle cx="819.4" cy="130.8" r="0.75"/><circle cx="835.0" cy="131.9" r="0.75"/><circle cx="883.1" cy="130.8" r="0.75"/><circle cx="916.9" cy="127.7" r="0.75"/><circle cx="970.7" cy="127.7" r="0.75"/><circle cx="1004.8" cy="124.9" r="0.75"/><circle cx="987.5" cy="138.0" r="0.75"/><circle cx="959.5" cy="139.3" r="0.75"/><circle cx="848.3" cy="145.0" r="0.75"/><circle cx="914.8" cy="145.0" r="0.75"/><circle cx="891.1" cy="149.2" r="0.75"/><circle cx="864.1" cy="155.1" r="0.75"/><circle cx="817.1" cy="155.1" r="0.75"/><circle cx="813.9" cy="161.4" r="0.75"/><circle cx="925.3" cy="155.9" r="0.75"/><circle cx="972.8" cy="153.4" r="0.75"/><circle cx="981.2" cy="151.7" r="0.75"/><circle cx="807.2" cy="178.1" r="0.75"/><circle cx="817.7" cy="179.1" r="0.75"/><circle cx="820.9" cy="180.2" r="0.75"/><circle cx="831.0" cy="179.8" r="0.75"/><circle cx="912.2" cy="172.0" r="0.75"/><circle cx="913.1" cy="180.8" r="0.75"/><circle cx="809.9" cy="193.9" r="0.75"/><circle cx="881.6" cy="195.0" r="0.75"/><circle cx="883.5" cy="196.6" r="0.75"/><circle cx="978.1" cy="192.0" r="0.75"/><circle cx="970.0" cy="193.9" r="0.75"/><circle cx="852.1" cy="202.6" r="0.75"/><circle cx="898.9" cy="206.8" r="0.75"/><circle cx="892.6" cy="208.9" r="0.75"/><circle cx="820.5" cy="209.9" r="0.75"/><circle cx="816.0" cy="215.0" r="0.75"/><circle cx="844.1" cy="217.3" r="0.75"/><circle cx="884.2" cy="219.2" r="0.75"/><circle cx="901.7" cy="216.3" r="0.75"/><circle cx="875.3" cy="222.6" r="0.75"/><circle cx="856.7" cy="220.9" r="0.75"/><circle cx="817.1" cy="225.1" r="0.75"/><circle cx="979.7" cy="207.2" r="0.75"/><circle cx="970.7" cy="227.2" r="0.75"/><circle cx="219.1" cy="234.8" r="0.75"/><circle cx="222.9" cy="242.0" r="0.75"/><circle cx="252.4" cy="242.0" r="0.75"/><circle cx="268.2" cy="234.8" r="0.75"/><circle cx="270.8" cy="237.8" r="0.75"/><circle cx="278.8" cy="231.6" r="0.75"/><circle cx="281.3" cy="242.0" r="0.75"/><circle cx="307.0" cy="233.7" r="0.75"/><circle cx="336.6" cy="238.4" r="0.75"/><circle cx="360.4" cy="240.1" r="0.75"/><circle cx="353.0" cy="243.7" r="0.75"/><circle cx="361.1" cy="244.1" r="0.75"/><circle cx="263.0" cy="249.6" r="0.75"/><circle cx="271.8" cy="247.9" r="0.75"/><circle cx="300.7" cy="252.1" r="0.75"/><circle cx="325.0" cy="254.8" r="0.75"/><circle cx="223.9" cy="259.1" r="0.75"/><circle cx="223.9" cy="265.8" r="0.75"/><circle cx="317.8" cy="263.7" r="0.75"/><circle cx="353.0" cy="263.7" r="0.75"/><circle cx="358.9" cy="261.0" r="0.75"/><circle cx="210.6" cy="269.0" r="0.75"/><circle cx="191.0" cy="274.2" r="0.75"/><circle cx="293.5" cy="271.7" r="0.75"/><circle cx="349.9" cy="273.8" r="0.75"/><circle cx="357.7" cy="275.9" r="0.75"/><circle cx="371.6" cy="273.2" r="0.75"/><circle cx="366.8" cy="277.8" r="0.75"/><circle cx="360.8" cy="280.6" r="0.75"/><circle cx="167.0" cy="281.0" r="0.75"/><circle cx="197.3" cy="282.1" r="0.75"/><circle cx="276.7" cy="279.5" r="0.75"/><circle cx="252.4" cy="283.7" r="0.75"/><circle cx="360.0" cy="285.4" r="0.75"/><circle cx="334.7" cy="290.7" r="0.75"/><circle cx="350.9" cy="292.2" r="0.75"/><circle cx="164.2" cy="294.9" r="0.75"/><circle cx="302.4" cy="293.7" r="0.75"/><circle cx="322.4" cy="297.0" r="0.75"/><circle cx="271.8" cy="300.6" r="0.75"/><circle cx="340.8" cy="301.3" r="0.75"/><circle cx="319.9" cy="304.8" r="0.75"/><circle cx="227.1" cy="307.6" r="0.75"/><circle cx="241.2" cy="308.4" r="0.75"/><circle cx="251.8" cy="307.6" r="0.75"/><circle cx="268.2" cy="308.4" r="0.75"/><circle cx="314.6" cy="309.1" r="0.75"/><circle cx="233.8" cy="311.8" r="0.75"/><circle cx="311.3" cy="311.8" r="0.75"/><circle cx="335.7" cy="312.9" r="0.75"/><circle cx="341.9" cy="314.8" r="0.75"/><circle cx="361.1" cy="315.0" r="0.75"/><circle cx="357.7" cy="318.6" r="0.75"/><circle cx="371.6" cy="321.7" r="0.75"/><circle cx="256.0" cy="320.7" r="0.75"/><circle cx="286.6" cy="322.4" r="0.75"/><circle cx="317.2" cy="323.2" r="0.75"/><circle cx="238.7" cy="323.8" r="0.75"/><circle cx="170.1" cy="324.9" r="0.75"/><circle cx="187.8" cy="326.6" r="0.75"/><circle cx="221.2" cy="325.9" r="0.75"/><circle cx="259.6" cy="327.0" r="0.75"/><circle cx="226.5" cy="329.5" r="0.75"/><circle cx="233.8" cy="330.2" r="0.75"/><circle cx="180.7" cy="330.2" r="0.75"/><circle cx="299.9" cy="327.6" r="0.75"/><circle cx="302.4" cy="334.0" r="0.75"/><circle cx="175.4" cy="335.4" r="0.75"/><circle cx="233.2" cy="339.0" r="0.75"/><circle cx="279.8" cy="340.7" r="0.75"/><circle cx="319.9" cy="338.0" r="0.75"/><circle cx="324.1" cy="340.1" r="0.75"/><circle cx="369.9" cy="340.7" r="0.75"/><circle cx="167.8" cy="344.3" r="0.75"/><circle cx="317.8" cy="344.3" r="0.75"/><circle cx="301.4" cy="352.9" r="0.75"/><circle cx="307.7" cy="355.9" r="0.75"/><circle cx="349.9" cy="356.5" r="0.75"/><circle cx="366.1" cy="359.1" r="0.75"/><circle cx="309.4" cy="365.0" r="0.75"/><circle cx="311.9" cy="368.1" r="0.75"/><circle cx="249.0" cy="369.8" r="0.75"/><circle cx="189.5" cy="369.8" r="0.75"/><circle cx="396.7" cy="238.4" r="0.75"/><circle cx="473.1" cy="234.8" r="0.75"/><circle cx="540.2" cy="240.1" r="0.75"/><circle cx="389.8" cy="246.2" r="0.75"/><circle cx="384.9" cy="249.6" r="0.75"/><circle cx="421.4" cy="253.2" r="0.75"/><circle cx="427.7" cy="253.2" r="0.75"/><circle cx="490.6" cy="248.9" r="0.75"/><circle cx="523.7" cy="255.9" r="0.75"/><circle cx="579.0" cy="257.8" r="0.75"/><circle cx="423.1" cy="261.2" r="0.75"/><circle cx="460.4" cy="262.0" r="0.75"/><circle cx="400.3" cy="265.4" r="0.75"/><circle cx="401.4" cy="268.3" r="0.75"/><circle cx="484.3" cy="266.2" r="0.75"/><circle cx="515.9" cy="267.3" r="0.75"/><circle cx="487.9" cy="272.6" r="0.75"/><circle cx="411.9" cy="278.9" r="0.75"/><circle cx="446.7" cy="281.2" r="0.75"/><circle cx="524.8" cy="283.7" r="0.75"/><circle cx="477.3" cy="291.1" r="0.75"/><circle cx="438.9" cy="294.3" r="0.75"/><circle cx="380.9" cy="294.9" r="0.75"/><circle cx="466.1" cy="296.0" r="0.75"/><circle cx="546.9" cy="301.3" r="0.75"/><circle cx="553.7" cy="300.2" r="0.75"/><circle cx="376.1" cy="300.6" r="0.75"/><circle cx="428.4" cy="300.0" r="0.75"/><circle cx="415.1" cy="304.8" r="0.75"/><circle cx="492.1" cy="303.2" r="0.75"/><circle cx="402.0" cy="308.4" r="0.75"/><circle cx="440.8" cy="317.1" r="0.75"/><circle cx="457.3" cy="317.1" r="0.75"/><circle cx="503.1" cy="321.7" r="0.75"/><circle cx="442.9" cy="327.6" r="0.75"/><circle cx="580.7" cy="327.6" r="0.75"/><circle cx="402.0" cy="334.8" r="0.75"/><circle cx="478.0" cy="335.4" r="0.75"/><circle cx="484.3" cy="334.8" r="0.75"/><circle cx="510.0" cy="336.1" r="0.75"/><circle cx="540.2" cy="337.1" r="0.75"/><circle cx="544.8" cy="337.1" r="0.75"/><circle cx="569.1" cy="334.4" r="0.75"/><circle cx="434.7" cy="339.0" r="0.75"/><circle cx="578.2" cy="341.8" r="0.75"/><circle cx="569.1" cy="343.4" r="0.75"/><circle cx="522.7" cy="343.4" r="0.75"/><circle cx="382.8" cy="346.0" r="0.75"/><circle cx="563.2" cy="347.0" r="0.75"/><circle cx="447.8" cy="350.6" r="0.75"/><circle cx="499.9" cy="353.8" r="0.75"/><circle cx="473.1" cy="356.9" r="0.75"/><circle cx="504.3" cy="359.1" r="0.75"/><circle cx="455.2" cy="363.5" r="0.75"/><circle cx="476.7" cy="363.9" r="0.75"/><circle cx="522.7" cy="364.3" r="0.75"/><circle cx="568.0" cy="365.0" r="0.75"/><circle cx="577.1" cy="364.3" r="0.75"/><circle cx="386.0" cy="370.9" r="0.75"/><circle cx="397.8" cy="371.3" r="0.75"/><circle cx="501.6" cy="370.7" r="0.75"/><circle cx="543.1" cy="373.4" r="0.75"/><circle cx="602.7" cy="237.8" r="0.75"/><circle cx="616.8" cy="237.8" r="0.75"/><circle cx="638.5" cy="237.8" r="0.75"/><circle cx="642.7" cy="240.1" r="0.75"/><circle cx="674.0" cy="232.5" r="0.75"/><circle cx="688.1" cy="233.1" r="0.75"/><circle cx="705.0" cy="242.0" r="0.75"/><circle cx="713.8" cy="238.4" r="0.75"/><circle cx="737.0" cy="238.4" r="0.75"/><circle cx="764.5" cy="244.1" r="0.75"/><circle cx="771.4" cy="242.0" r="0.75"/><circle cx="796.8" cy="234.8" r="0.75"/><circle cx="737.0" cy="250.0" r="0.75"/><circle cx="799.5" cy="252.5" r="0.75"/><circle cx="778.2" cy="256.9" r="0.75"/><circle cx="670.8" cy="254.8" r="0.75"/><circle cx="657.9" cy="259.1" r="0.75"/><circle cx="685.6" cy="262.0" r="0.75"/><circle cx="699.1" cy="264.8" r="0.75"/><circle cx="681.1" cy="267.3" r="0.75"/><circle cx="599.9" cy="270.7" r="0.75"/><circle cx="630.5" cy="271.7" r="0.75"/><circle cx="644.4" cy="269.0" r="0.75"/><circle cx="700.3" cy="272.6" r="0.75"/><circle cx="618.1" cy="275.9" r="0.75"/><circle cx="759.8" cy="270.7" r="0.75"/><circle cx="771.9" cy="270.7" r="0.75"/><circle cx="766.2" cy="274.2" r="0.75"/><circle cx="756.0" cy="278.9" r="0.75"/><circle cx="759.2" cy="277.8" r="0.75"/><circle cx="772.1" cy="279.5" r="0.75"/><circle cx="786.2" cy="287.3" r="0.75"/><circle cx="694.0" cy="281.2" r="0.75"/><circle cx="718.7" cy="279.5" r="0.75"/><circle cx="676.9" cy="283.7" r="0.75"/><circle cx="607.9" cy="292.8" r="0.75"/><circle cx="642.7" cy="294.3" r="0.75"/><circle cx="722.3" cy="294.3" r="0.75"/><circle cx="688.7" cy="297.9" r="0.75"/><circle cx="695.9" cy="297.0" r="0.75"/><circle cx="758.1" cy="300.0" r="0.75"/><circle cx="624.4" cy="307.6" r="0.75"/><circle cx="636.8" cy="309.1" r="0.75"/><circle cx="641.1" cy="305.9" r="0.75"/><circle cx="645.5" cy="307.6" r="0.75"/><circle cx="667.0" cy="305.9" r="0.75"/><circle cx="694.9" cy="306.9" r="0.75"/><circle cx="697.0" cy="311.2" r="0.75"/><circle cx="717.0" cy="312.9" r="0.75"/><circle cx="592.7" cy="312.9" r="0.75"/><circle cx="797.8" cy="313.9" r="0.75"/><circle cx="697.0" cy="320.0" r="0.75"/><circle cx="706.7" cy="319.0" r="0.75"/><circle cx="721.4" cy="321.1" r="0.75"/><circle cx="730.3" cy="321.1" r="0.75"/><circle cx="664.9" cy="328.7" r="0.75"/><circle cx="757.3" cy="329.5" r="0.75"/><circle cx="645.5" cy="340.7" r="0.75"/><circle cx="758.1" cy="339.2" r="0.75"/><circle cx="786.8" cy="339.2" r="0.75"/><circle cx="727.8" cy="350.6" r="0.75"/><circle cx="772.1" cy="352.9" r="0.75"/><circle cx="797.8" cy="354.0" r="0.75"/><circle cx="623.8" cy="355.9" r="0.75"/><circle cx="630.1" cy="363.5" r="0.75"/><circle cx="652.7" cy="363.5" r="0.75"/><circle cx="664.5" cy="365.0" r="0.75"/><circle cx="721.4" cy="361.8" r="0.75"/><circle cx="782.6" cy="368.1" r="0.75"/><circle cx="788.9" cy="368.8" r="0.75"/><circle cx="856.7" cy="232.1" r="0.75"/><circle cx="874.7" cy="233.7" r="0.75"/><circle cx="882.5" cy="236.7" r="0.75"/><circle cx="881.6" cy="243.0" r="0.75"/><circle cx="824.0" cy="239.0" r="0.75"/><circle cx="951.7" cy="238.0" r="0.75"/><circle cx="966.4" cy="238.4" r="0.75"/><circle cx="877.8" cy="252.7" r="0.75"/><circle cx="915.8" cy="257.8" r="0.75"/><circle cx="903.6" cy="264.3" r="0.75"/><circle cx="985.9" cy="259.1" r="0.75"/><circle cx="1002.9" cy="262.0" r="0.75"/><circle cx="961.6" cy="261.2" r="0.75"/><circle cx="821.9" cy="270.0" r="0.75"/><circle cx="847.7" cy="271.5" r="0.75"/><circle cx="877.2" cy="272.6" r="0.75"/><circle cx="885.2" cy="288.0" r="0.75"/><circle cx="913.1" cy="286.5" r="0.75"/><circle cx="941.1" cy="290.1" r="0.75"/><circle cx="955.5" cy="286.9" r="0.75"/><circle cx="973.4" cy="283.7" r="0.75"/><circle cx="1000.2" cy="284.8" r="0.75"/><circle cx="837.1" cy="293.7" r="0.75"/><circle cx="921.1" cy="293.7" r="0.75"/><circle cx="910.5" cy="302.3" r="0.75"/><circle cx="808.9" cy="304.8" r="0.75"/><circle cx="854.6" cy="307.6" r="0.75"/><circle cx="859.9" cy="307.6" r="0.75"/><circle cx="864.8" cy="311.8" r="0.75"/><circle cx="809.9" cy="313.7" r="0.75"/><circle cx="832.9" cy="316.0" r="0.75"/><circle cx="912.0" cy="317.1" r="0.75"/><circle cx="1002.3" cy="318.6" r="0.75"/><circle cx="1008.2" cy="317.1" r="0.75"/><circle cx="935.9" cy="323.2" r="0.75"/><circle cx="838.8" cy="326.6" r="0.75"/><circle cx="841.3" cy="331.2" r="0.75"/><circle cx="844.1" cy="331.2" r="0.75"/><circle cx="866.9" cy="332.9" r="0.75"/><circle cx="974.5" cy="329.5" r="0.75"/><circle cx="946.4" cy="335.4" r="0.75"/><circle cx="969.0" cy="339.0" r="0.75"/><circle cx="908.9" cy="340.7" r="0.75"/><circle cx="844.1" cy="346.0" r="0.75"/><circle cx="955.3" cy="355.1" r="0.75"/><circle cx="820.2" cy="364.3" r="0.75"/><circle cx="861.4" cy="361.8" r="0.75"/><circle cx="925.3" cy="361.8" r="0.75"/><circle cx="833.5" cy="367.7" r="0.75"/><circle cx="859.9" cy="369.2" r="0.75"/><circle cx="955.3" cy="365.0" r="0.75"/><circle cx="189.5" cy="378.2" r="0.75"/><circle cx="168.4" cy="377.2" r="0.75"/><circle cx="207.0" cy="385.6" r="0.75"/><circle cx="250.1" cy="379.9" r="0.75"/><circle cx="330.9" cy="378.2" r="0.75"/><circle cx="347.1" cy="378.9" r="0.75"/><circle cx="367.2" cy="383.9" r="0.75"/><circle cx="337.8" cy="389.2" r="0.75"/><circle cx="367.2" cy="391.5" r="0.75"/><circle cx="360.8" cy="394.0" r="0.75"/><circle cx="344.2" cy="395.1" r="0.75"/><circle cx="187.8" cy="394.0" r="0.75"/><circle cx="198.0" cy="393.4" r="0.75"/><circle cx="227.1" cy="391.5" r="0.75"/><circle cx="317.8" cy="397.8" r="0.75"/><circle cx="322.4" cy="398.7" r="0.75"/><circle cx="338.9" cy="402.1" r="0.75"/><circle cx="180.0" cy="401.8" r="0.75"/><circle cx="212.1" cy="406.3" r="0.75"/><circle cx="272.9" cy="402.9" r="0.75"/><circle cx="231.7" cy="409.9" r="0.75"/><circle cx="311.3" cy="407.8" r="0.75"/><circle cx="336.8" cy="408.2" r="0.75"/><circle cx="351.4" cy="414.1" r="0.75"/><circle cx="299.7" cy="415.1" r="0.75"/><circle cx="368.2" cy="416.2" r="0.75"/><circle cx="184.9" cy="416.8" r="0.75"/><circle cx="283.0" cy="421.0" r="0.75"/><circle cx="341.0" cy="422.1" r="0.75"/><circle cx="337.8" cy="426.7" r="0.75"/><circle cx="184.3" cy="427.4" r="0.75"/><circle cx="201.8" cy="431.0" r="0.75"/><circle cx="276.0" cy="429.3" r="0.75"/><circle cx="352.0" cy="429.3" r="0.75"/><circle cx="372.4" cy="429.9" r="0.75"/><circle cx="296.1" cy="434.5" r="0.75"/><circle cx="324.1" cy="436.9" r="0.75"/><circle cx="355.8" cy="440.0" r="0.75"/><circle cx="182.8" cy="443.0" r="0.75"/><circle cx="177.9" cy="444.3" r="0.75"/><circle cx="167.0" cy="445.1" r="0.75"/><circle cx="247.1" cy="444.0" r="0.75"/><circle cx="367.2" cy="445.7" r="0.75"/><circle cx="254.9" cy="448.3" r="0.75"/><circle cx="179.0" cy="449.9" r="0.75"/><circle cx="355.8" cy="449.9" r="0.75"/><circle cx="181.7" cy="453.7" r="0.75"/><circle cx="284.1" cy="456.3" r="0.75"/><circle cx="334.7" cy="455.2" r="0.75"/><circle cx="291.9" cy="461.6" r="0.75"/><circle cx="164.2" cy="466.2" r="0.75"/><circle cx="168.9" cy="466.2" r="0.75"/><circle cx="193.1" cy="473.8" r="0.75"/><circle cx="288.3" cy="475.7" r="0.75"/><circle cx="233.2" cy="477.4" r="0.75"/><circle cx="203.2" cy="479.9" r="0.75"/><circle cx="277.1" cy="481.0" r="0.75"/><circle cx="352.0" cy="481.0" r="0.75"/><circle cx="200.1" cy="486.9" r="0.75"/><circle cx="361.9" cy="486.9" r="0.75"/><circle cx="256.0" cy="493.2" r="0.75"/><circle cx="291.9" cy="492.1" r="0.75"/><circle cx="179.0" cy="505.2" r="0.75"/><circle cx="311.3" cy="509.0" r="0.75"/><circle cx="314.6" cy="513.9" r="0.75"/><circle cx="389.8" cy="376.7" r="0.75"/><circle cx="396.1" cy="375.7" r="0.75"/><circle cx="435.5" cy="378.2" r="0.75"/><circle cx="436.2" cy="384.1" r="0.75"/><circle cx="468.9" cy="378.2" r="0.75"/><circle cx="491.0" cy="382.9" r="0.75"/><circle cx="525.4" cy="384.1" r="0.75"/><circle cx="536.0" cy="375.7" r="0.75"/><circle cx="442.9" cy="390.5" r="0.75"/><circle cx="438.9" cy="394.7" r="0.75"/><circle cx="456.9" cy="393.4" r="0.75"/><circle cx="411.9" cy="396.6" r="0.75"/><circle cx="380.9" cy="399.3" r="0.75"/><circle cx="475.8" cy="396.6" r="0.75"/><circle cx="474.6" cy="400.4" r="0.75"/><circle cx="511.7" cy="396.8" r="0.75"/><circle cx="526.9" cy="396.8" r="0.75"/><circle cx="446.7" cy="404.0" r="0.75"/><circle cx="516.8" cy="404.6" r="0.75"/><circle cx="433.6" cy="411.6" r="0.75"/><circle cx="449.3" cy="410.9" r="0.75"/><circle cx="546.5" cy="412.6" r="0.75"/><circle cx="482.6" cy="416.8" r="0.75"/><circle cx="574.8" cy="421.5" r="0.75"/><circle cx="387.2" cy="424.0" r="0.75"/><circle cx="416.8" cy="424.0" r="0.75"/><circle cx="459.0" cy="422.9" r="0.75"/><circle cx="485.1" cy="426.7" r="0.75"/><circle cx="511.7" cy="426.7" r="0.75"/><circle cx="575.4" cy="429.9" r="0.75"/><circle cx="379.2" cy="439.8" r="0.75"/><circle cx="426.3" cy="444.0" r="0.75"/><circle cx="449.9" cy="444.0" r="0.75"/><circle cx="498.4" cy="451.0" r="0.75"/><circle cx="453.1" cy="453.1" r="0.75"/><circle cx="523.7" cy="453.7" r="0.75"/><circle cx="534.9" cy="452.7" r="0.75"/><circle cx="432.6" cy="456.3" r="0.75"/><circle cx="425.6" cy="459.0" r="0.75"/><circle cx="442.9" cy="459.0" r="0.75"/><circle cx="393.4" cy="463.2" r="0.75"/><circle cx="536.0" cy="462.6" r="0.75"/><circle cx="460.9" cy="466.8" r="0.75"/><circle cx="424.2" cy="468.5" r="0.75"/><circle cx="571.8" cy="467.9" r="0.75"/><circle cx="537.0" cy="471.0" r="0.75"/><circle cx="416.8" cy="473.8" r="0.75"/><circle cx="502.6" cy="473.8" r="0.75"/><circle cx="483.6" cy="478.0" r="0.75"/><circle cx="505.2" cy="479.9" r="0.75"/><circle cx="517.8" cy="478.9" r="0.75"/><circle cx="496.7" cy="482.0" r="0.75"/><circle cx="468.5" cy="483.7" r="0.75"/><circle cx="475.8" cy="483.3" r="0.75"/><circle cx="557.9" cy="481.0" r="0.75"/><circle cx="473.1" cy="487.9" r="0.75"/><circle cx="563.2" cy="485.8" r="0.75"/><circle cx="553.9" cy="489.6" r="0.75"/><circle cx="436.8" cy="492.1" r="0.75"/><circle cx="377.5" cy="502.1" r="0.75"/><circle cx="427.7" cy="501.0" r="0.75"/><circle cx="434.7" cy="499.1" r="0.75"/><circle cx="486.8" cy="499.1" r="0.75"/><circle cx="586.6" cy="506.9" r="0.75"/><circle cx="409.8" cy="512.2" r="0.75"/><circle cx="425.6" cy="512.2" r="0.75"/><circle cx="517.0" cy="513.2" r="0.75"/><circle cx="541.0" cy="510.1" r="0.75"/><circle cx="540.2" cy="513.2" r="0.75"/><circle cx="570.1" cy="514.9" r="0.75"/><circle cx="667.0" cy="375.7" r="0.75"/><circle cx="601.0" cy="381.0" r="0.75"/><circle cx="658.6" cy="384.1" r="0.75"/><circle cx="729.9" cy="384.5" r="0.75"/><circle cx="720.8" cy="387.1" r="0.75"/><circle cx="674.0" cy="388.8" r="0.75"/><circle cx="724.0" cy="391.5" r="0.75"/><circle cx="648.0" cy="392.4" r="0.75"/><circle cx="790.4" cy="388.1" r="0.75"/><circle cx="800.3" cy="377.6" r="0.75"/><circle cx="592.7" cy="395.7" r="0.75"/><circle cx="597.4" cy="402.9" r="0.75"/><circle cx="612.2" cy="401.8" r="0.75"/><circle cx="658.6" cy="400.4" r="0.75"/><circle cx="662.8" cy="401.8" r="0.75"/><circle cx="682.2" cy="400.4" r="0.75"/><circle cx="684.9" cy="404.6" r="0.75"/><circle cx="791.5" cy="398.7" r="0.75"/><circle cx="757.3" cy="401.0" r="0.75"/><circle cx="745.1" cy="407.1" r="0.75"/><circle cx="803.7" cy="407.8" r="0.75"/><circle cx="632.2" cy="409.2" r="0.75"/><circle cx="638.9" cy="410.9" r="0.75"/><circle cx="611.1" cy="413.5" r="0.75"/><circle cx="676.9" cy="414.1" r="0.75"/><circle cx="633.2" cy="420.4" r="0.75"/><circle cx="722.9" cy="419.4" r="0.75"/><circle cx="599.9" cy="424.0" r="0.75"/><circle cx="612.8" cy="424.6" r="0.75"/><circle cx="619.1" cy="422.9" r="0.75"/><circle cx="725.7" cy="425.7" r="0.75"/><circle cx="592.7" cy="429.3" r="0.75"/><circle cx="683.9" cy="433.7" r="0.75"/><circle cx="652.2" cy="442.1" r="0.75"/><circle cx="667.0" cy="445.1" r="0.75"/><circle cx="599.1" cy="452.7" r="0.75"/><circle cx="620.0" cy="453.7" r="0.75"/><circle cx="599.1" cy="461.6" r="0.75"/><circle cx="716.2" cy="462.2" r="0.75"/><circle cx="708.1" cy="464.1" r="0.75"/><circle cx="662.8" cy="470.0" r="0.75"/><circle cx="719.7" cy="472.7" r="0.75"/><circle cx="752.0" cy="472.7" r="0.75"/><circle cx="652.9" cy="477.0" r="0.75"/><circle cx="616.4" cy="481.6" r="0.75"/><circle cx="793.2" cy="486.9" r="0.75"/><circle cx="657.5" cy="493.8" r="0.75"/><circle cx="681.8" cy="494.9" r="0.75"/><circle cx="738.1" cy="492.1" r="0.75"/><circle cx="787.9" cy="497.0" r="0.75"/><circle cx="722.9" cy="499.9" r="0.75"/><circle cx="746.1" cy="502.1" r="0.75"/><circle cx="685.6" cy="510.5" r="0.75"/><circle cx="886.9" cy="386.2" r="0.75"/><circle cx="1000.8" cy="375.7" r="0.75"/><circle cx="1002.9" cy="379.9" r="0.75"/><circle cx="973.4" cy="391.5" r="0.75"/><circle cx="980.6" cy="392.4" r="0.75"/><circle cx="984.8" cy="397.8" r="0.75"/><circle cx="904.2" cy="401.0" r="0.75"/><circle cx="967.1" cy="404.0" r="0.75"/><circle cx="981.2" cy="406.3" r="0.75"/><circle cx="968.1" cy="425.7" r="0.75"/><circle cx="964.8" cy="435.2" r="0.75"/><circle cx="980.6" cy="432.6" r="0.75"/><circle cx="993.9" cy="444.0" r="0.75"/><circle cx="916.9" cy="456.9" r="0.75"/><circle cx="839.9" cy="462.2" r="0.75"/><circle cx="942.2" cy="468.5" r="0.75"/><circle cx="892.0" cy="471.0" r="0.75"/><circle cx="814.1" cy="472.7" r="0.75"/><circle cx="902.1" cy="475.7" r="0.75"/><circle cx="1008.6" cy="467.5" r="0.75"/><circle cx="812.4" cy="486.9" r="0.75"/><circle cx="861.4" cy="494.9" r="0.75"/><circle cx="852.9" cy="499.1" r="0.75"/><circle cx="869.4" cy="499.1" r="0.75"/><circle cx="875.7" cy="499.1" r="0.75"/><circle cx="878.9" cy="502.7" r="0.75"/><circle cx="234.9" cy="522.9" r="0.75"/><circle cx="235.9" cy="528.0" r="0.75"/><circle cx="210.6" cy="532.2" r="0.75"/><circle cx="192.7" cy="534.3" r="0.75"/><circle cx="308.7" cy="533.2" r="0.75"/><circle cx="340.0" cy="531.8" r="0.75"/><circle cx="344.6" cy="529.0" r="0.75"/><circle cx="265.5" cy="540.2" r="0.75"/><circle cx="313.0" cy="542.9" r="0.75"/><circle cx="174.8" cy="549.1" r="0.75"/><circle cx="248.6" cy="550.1" r="0.75"/><circle cx="284.1" cy="549.1" r="0.75"/><circle cx="344.2" cy="547.2" r="0.75"/><circle cx="335.7" cy="553.3" r="0.75"/><circle cx="368.2" cy="558.8" r="0.75"/><circle cx="346.1" cy="561.9" r="0.75"/><circle cx="260.2" cy="564.9" r="0.75"/><circle cx="366.1" cy="569.1" r="0.75"/><circle cx="323.1" cy="577.1" r="0.75"/><circle cx="317.8" cy="582.4" r="0.75"/><circle cx="367.2" cy="590.2" r="0.75"/><circle cx="321.8" cy="591.9" r="0.75"/><circle cx="308.7" cy="595.5" r="0.75"/><circle cx="250.7" cy="594.0" r="0.75"/><circle cx="247.1" cy="595.5" r="0.75"/><circle cx="224.3" cy="596.1" r="0.75"/><circle cx="172.0" cy="597.8" r="0.75"/><circle cx="189.5" cy="601.8" r="0.75"/><circle cx="185.9" cy="603.9" r="0.75"/><circle cx="233.8" cy="606.0" r="0.75"/><circle cx="366.1" cy="606.0" r="0.75"/><circle cx="171.0" cy="610.9" r="0.75"/><circle cx="371.6" cy="614.0" r="0.75"/><circle cx="184.9" cy="617.2" r="0.75"/><circle cx="183.8" cy="621.9" r="0.75"/><circle cx="263.8" cy="626.1" r="0.75"/><circle cx="327.7" cy="625.2" r="0.75"/><circle cx="219.1" cy="631.3" r="0.75"/><circle cx="364.6" cy="633.0" r="0.75"/><circle cx="174.8" cy="638.3" r="0.75"/><circle cx="189.5" cy="638.3" r="0.75"/><circle cx="374.6" cy="638.7" r="0.75"/><circle cx="297.1" cy="644.2" r="0.75"/><circle cx="232.4" cy="649.9" r="0.75"/><circle cx="235.9" cy="655.8" r="0.75"/><circle cx="372.0" cy="654.1" r="0.75"/><circle cx="422.0" cy="519.1" r="0.75"/><circle cx="450.9" cy="522.7" r="0.75"/><circle cx="456.9" cy="521.6" r="0.75"/><circle cx="571.8" cy="526.1" r="0.75"/><circle cx="414.0" cy="533.2" r="0.75"/><circle cx="444.6" cy="532.2" r="0.75"/><circle cx="440.8" cy="539.2" r="0.75"/><circle cx="512.6" cy="531.3" r="0.75"/><circle cx="532.6" cy="532.2" r="0.75"/><circle cx="538.9" cy="529.7" r="0.75"/><circle cx="554.3" cy="529.7" r="0.75"/><circle cx="553.7" cy="534.9" r="0.75"/><circle cx="533.9" cy="540.8" r="0.75"/><circle cx="513.2" cy="549.1" r="0.75"/><circle cx="587.7" cy="555.0" r="0.75"/><circle cx="572.9" cy="562.8" r="0.75"/><circle cx="391.9" cy="557.7" r="0.75"/><circle cx="413.0" cy="557.7" r="0.75"/><circle cx="423.9" cy="556.7" r="0.75"/><circle cx="538.9" cy="565.9" r="0.75"/><circle cx="514.2" cy="567.2" r="0.75"/><circle cx="496.7" cy="581.3" r="0.75"/><circle cx="526.3" cy="583.0" r="0.75"/><circle cx="562.1" cy="581.3" r="0.75"/><circle cx="467.8" cy="587.3" r="0.75"/><circle cx="406.0" cy="591.9" r="0.75"/><circle cx="410.9" cy="595.5" r="0.75"/><circle cx="432.6" cy="590.2" r="0.75"/><circle cx="446.7" cy="591.9" r="0.75"/><circle cx="479.9" cy="600.8" r="0.75"/><circle cx="514.9" cy="597.2" r="0.75"/><circle cx="518.5" cy="600.8" r="0.75"/><circle cx="429.2" cy="603.1" r="0.75"/><circle cx="471.4" cy="615.5" r="0.75"/><circle cx="512.1" cy="613.6" r="0.75"/><circle cx="566.6" cy="617.8" r="0.75"/><circle cx="391.9" cy="618.9" r="0.75"/><circle cx="454.5" cy="621.4" r="0.75"/><circle cx="469.9" cy="620.8" r="0.75"/><circle cx="406.6" cy="627.8" r="0.75"/><circle cx="430.9" cy="628.8" r="0.75"/><circle cx="444.0" cy="632.0" r="0.75"/><circle cx="472.0" cy="630.3" r="0.75"/><circle cx="522.0" cy="641.9" r="0.75"/><circle cx="567.6" cy="651.4" r="0.75"/><circle cx="437.9" cy="654.8" r="0.75"/><circle cx="662.8" cy="519.1" r="0.75"/><circle cx="697.6" cy="524.8" r="0.75"/><circle cx="596.3" cy="532.2" r="0.75"/><circle cx="592.1" cy="537.7" r="0.75"/><circle cx="691.9" cy="533.2" r="0.75"/><circle cx="715.9" cy="533.9" r="0.75"/><circle cx="618.1" cy="544.4" r="0.75"/><circle cx="740.8" cy="540.8" r="0.75"/><circle cx="765.7" cy="543.8" r="0.75"/><circle cx="603.3" cy="549.1" r="0.75"/><circle cx="688.1" cy="556.0" r="0.75"/><circle cx="746.1" cy="555.0" r="0.75"/><circle cx="611.1" cy="572.9" r="0.75"/><circle cx="621.6" cy="574.4" r="0.75"/><circle cx="621.0" cy="579.7" r="0.75"/><circle cx="687.0" cy="570.8" r="0.75"/><circle cx="763.4" cy="572.9" r="0.75"/><circle cx="780.9" cy="581.3" r="0.75"/><circle cx="675.9" cy="581.3" r="0.75"/><circle cx="632.2" cy="588.3" r="0.75"/><circle cx="765.7" cy="591.9" r="0.75"/><circle cx="609.6" cy="597.8" r="0.75"/><circle cx="595.7" cy="605.0" r="0.75"/><circle cx="744.0" cy="602.4" r="0.75"/><circle cx="638.1" cy="615.5" r="0.75"/><circle cx="756.7" cy="616.2" r="0.75"/><circle cx="681.1" cy="620.0" r="0.75"/><circle cx="655.8" cy="623.5" r="0.75"/><circle cx="596.3" cy="626.1" r="0.75"/><circle cx="705.6" cy="628.8" r="0.75"/><circle cx="613.2" cy="632.0" r="0.75"/><circle cx="722.9" cy="631.3" r="0.75"/><circle cx="706.7" cy="638.3" r="0.75"/><circle cx="725.7" cy="645.1" r="0.75"/><circle cx="779.2" cy="637.3" r="0.75"/><circle cx="616.4" cy="641.9" r="0.75"/><circle cx="597.4" cy="645.1" r="0.75"/><circle cx="745.1" cy="647.2" r="0.75"/><circle cx="631.1" cy="650.5" r="0.75"/><circle cx="843.0" cy="520.2" r="0.75"/><circle cx="847.7" cy="518.1" r="0.75"/><circle cx="905.9" cy="524.8" r="0.75"/><circle cx="931.6" cy="524.0" r="0.75"/><circle cx="963.7" cy="534.9" r="0.75"/><circle cx="971.1" cy="537.7" r="0.75"/><circle cx="887.8" cy="540.2" r="0.75"/><circle cx="883.1" cy="544.8" r="0.75"/><circle cx="884.2" cy="550.8" r="0.75"/><circle cx="844.1" cy="549.1" r="0.75"/><circle cx="925.9" cy="549.1" r="0.75"/><circle cx="952.7" cy="553.3" r="0.75"/><circle cx="825.7" cy="562.8" r="0.75"/><circle cx="839.9" cy="561.9" r="0.75"/><circle cx="847.7" cy="561.3" r="0.75"/><circle cx="886.9" cy="562.8" r="0.75"/><circle cx="919.0" cy="565.9" r="0.75"/><circle cx="996.0" cy="573.5" r="0.75"/><circle cx="939.4" cy="576.1" r="0.75"/><circle cx="887.8" cy="579.7" r="0.75"/><circle cx="873.0" cy="583.0" r="0.75"/><circle cx="994.5" cy="591.9" r="0.75"/><circle cx="979.7" cy="595.5" r="0.75"/><circle cx="995.4" cy="597.2" r="0.75"/><circle cx="812.4" cy="596.1" r="0.75"/><circle cx="808.6" cy="600.8" r="0.75"/><circle cx="844.1" cy="598.9" r="0.75"/><circle cx="909.5" cy="608.1" r="0.75"/><circle cx="1007.0" cy="610.2" r="0.75"/><circle cx="879.9" cy="618.9" r="0.75"/><circle cx="941.8" cy="618.9" r="0.75"/><circle cx="978.1" cy="626.1" r="0.75"/><circle cx="805.7" cy="627.8" r="0.75"/><circle cx="941.8" cy="630.5" r="0.75"/><circle cx="952.7" cy="630.5" r="0.75"/><circle cx="1002.3" cy="633.7" r="0.75"/><circle cx="933.1" cy="634.7" r="0.75"/><circle cx="895.4" cy="638.3" r="0.75"/><circle cx="904.8" cy="641.9" r="0.75"/><circle cx="917.9" cy="641.9" r="0.75"/><circle cx="923.6" cy="641.1" r="0.75"/><circle cx="934.2" cy="641.1" r="0.75"/><circle cx="934.2" cy="646.1" r="0.75"/></g><g fill="#d8d8d8"><circle cx="780.5" cy="283.3" r="1"/><circle cx="457.9" cy="481.6" r="1"/><circle cx="515.3" cy="490.7" r="1"/><circle cx="457.9" cy="511.6" r="1"/></g>
<g fill="#fff"><circle cx="226.3" cy="166" r="8"/><circle cx="296.4" cy="116.5" r="2.6"/><circle cx="350.2" cy="110.6" r="1.5"/><circle cx="238.4" cy="156.8" r="1.5"/><circle cx="183" cy="132" r="1.5"/><circle cx="172.7" cy="228.7" r="4"/><circle cx="352.3" cy="169.2" r="2.5"/><circle cx="375" cy="172.4" r="1.7"/><circle cx="438.8" cy="192.7" r="2.5"/><circle cx="440.6" cy="213.6" r="2.5"/><circle cx="409" cy="213.6" r="1.5"/><circle cx="262" cy="206" r="1.5"/><circle cx="284.9" cy="213.6" r="1.5"/><circle cx="248.4" cy="209" r="1.2"/><circle cx="287" cy="181.6" r="1.2"/><circle cx="225.7" cy="238.7" r="1.2"/><circle cx="342.3" cy="256.3" r="2.5"/><circle cx="456" cy="258" r="3.6"/><circle cx="389.7" cy="252.2" r="1.5"/><circle cx="324.3" cy="241.3" r="1.3"/><circle cx="320.8" cy="246.3" r="1.3"/><circle cx="362" cy="236" r="1.2"/><circle cx="285.5" cy="269.6" r="1.5"/><circle cx="441.8" cy="227.2" r="1"/><circle cx="546.3" cy="105.3" r="7.4"/><circle cx="578.7" cy="180.4" r="3"/><circle cx="614.6" cy="167.4" r="2.2"/><circle cx="538.4" cy="251.3" r="5"/><circle cx="465" cy="235.7" r="1.3"/><circle cx="512.8" cy="194.8" r="1"/><circle cx="554.6" cy="254.3" r="1"/><circle cx="588.7" cy="215.7" r="1"/><circle cx="581" cy="228" r="1"/><circle cx="634.6" cy="240" r="1"/><circle cx="631.7" cy="244.8" r="1"/><circle cx="691.4" cy="226.3" r="1.2"/><circle cx="707.6" cy="219.2" r="1"/><circle cx="735.6" cy="257" r="1"/><circle cx="511" cy="140.3" r="0.8"/><circle cx="828.2" cy="99.1" r="3.2"/><circle cx="885.3" cy="156.8" r="5"/><circle cx="764.3" cy="164.8" r="3.2"/><circle cx="855.9" cy="226.9" r="4"/><circle cx="852.6" cy="261.9" r="4"/><circle cx="989.2" cy="215.4" r="3.2"/><circle cx="922.7" cy="131.2" r="2.3"/><circle cx="927.1" cy="148.9" r="2.3"/><circle cx="975.1" cy="266" r="2.3"/><circle cx="889.2" cy="226" r="2.3"/><circle cx="961.9" cy="285.5" r="3"/><circle cx="915.4" cy="171.8" r="1.3"/><circle cx="857" cy="239" r="1.3"/><circle cx="800.8" cy="173.3" r="1.3"/><circle cx="797.9" cy="157.1" r="1"/><circle cx="847" cy="112.7" r="1"/><circle cx="938" cy="233.4" r="1"/><circle cx="976.3" cy="229.8" r="1"/><circle cx="819" cy="278.7" r="1"/><circle cx="898.6" cy="277" r="1"/><circle cx="916.2" cy="118.9" r="1"/><circle cx="872" cy="93" r="1"/><circle cx="402" cy="288.5" r="3"/><circle cx="406.2" cy="351.2" r="3.2"/><circle cx="457.7" cy="378.6" r="8"/><circle cx="171.5" cy="370.4" r="4"/><circle cx="175.7" cy="375.7" r="2"/><circle cx="219.2" cy="372.1" r="3"/><circle cx="191.3" cy="425.4" r="2.3"/><circle cx="373.2" cy="421" r="2.3"/><circle cx="360.8" cy="430.7" r="1.5"/><circle cx="387" cy="447.2" r="1.5"/><circle cx="355.5" cy="354.8" r="1.5"/><circle cx="443.8" cy="330.9" r="1.5"/><circle cx="247.5" cy="362.1" r="1.2"/><circle cx="263.4" cy="289.4" r="1.2"/><circle cx="370" cy="303.5" r="1.2"/><circle cx="232.8" cy="404.8" r="1.2"/><circle cx="207.7" cy="466.3" r="1.5"/><circle cx="324.6" cy="455.4" r="1.2"/><circle cx="446.7" cy="486" r="4.5"/><circle cx="574.3" cy="322.1" r="3.8"/><circle cx="605.8" cy="358" r="3"/><circle cx="647.9" cy="353.6" r="3"/><circle cx="541.3" cy="295.9" r="1.3"/><circle cx="537.2" cy="289.1" r="1"/><circle cx="511" cy="343.6" r="1"/><circle cx="641.4" cy="337.4" r="1"/><circle cx="647" cy="362.1" r="0.9"/><circle cx="535.1" cy="431.3" r="1.3"/><circle cx="552.2" cy="418" r="1"/><circle cx="607.5" cy="452.2" r="1.3"/><circle cx="541.9" cy="462.8" r="1.3"/><circle cx="705.6" cy="437.5" r="1.3"/><circle cx="666.4" cy="415.1" r="1"/><circle cx="734.7" cy="454.6" r="1"/><circle cx="476" cy="455.7" r="1"/><circle cx="578.7" cy="285" r="1"/><circle cx="791.4" cy="298.5" r="4"/><circle cx="990.7" cy="307.4" r="5"/><circle cx="874.4" cy="355.4" r="3.2"/><circle cx="935.7" cy="400.1" r="3.2"/><circle cx="932.4" cy="332.7" r="2.3"/><circle cx="914.8" cy="345.9" r="2.3"/><circle cx="847.3" cy="451.6" r="2.3"/><circle cx="886.7" cy="486" r="4.5"/><circle cx="803.8" cy="291.5" r="1.3"/><circle cx="892.1" cy="313.6" r="1.3"/><circle cx="828.2" cy="414.8" r="1.3"/><circle cx="782.6" cy="447.2" r="1.3"/><circle cx="925.7" cy="431.9" r="1"/><circle cx="924.8" cy="351.5" r="1"/><circle cx="781.1" cy="373.3" r="1"/><circle cx="792.6" cy="374.2" r="1"/><circle cx="457.7" cy="533" r="8"/><circle cx="417.4" cy="609.8" r="3"/><circle cx="279.3" cy="620.4" r="2.3"/><circle cx="378.2" cy="638.1" r="2.3"/><circle cx="419.4" cy="649.3" r="3"/><circle cx="278.4" cy="556.5" r="1.3"/><circle cx="253.7" cy="551" r="1"/><circle cx="251.9" cy="515" r="1"/><circle cx="357.9" cy="575.4" r="1"/><circle cx="291.4" cy="615.7" r="1"/><circle cx="228" cy="596.6" r="1"/><circle cx="309" cy="609" r="1"/><circle cx="526.3" cy="545.4" r="4.7"/><circle cx="525.4" cy="499.7" r="2.3"/><circle cx="738.8" cy="622.2" r="2.3"/><circle cx="564" cy="557.4" r="1.3"/><circle cx="635.2" cy="492.4" r="1.2"/><circle cx="653.2" cy="650.7" r="1.3"/><circle cx="725.9" cy="640.4" r="1.2"/><circle cx="753.3" cy="642.5" r="1"/><circle cx="707.6" cy="601.6" r="1"/><circle cx="560.2" cy="514.4" r="1"/><circle cx="511" cy="523" r="1"/><circle cx="526" cy="493.2" r="1"/><circle cx="468.6" cy="487" r="1"/><circle cx="945.1" cy="546.8" r="7.7"/><circle cx="970.4" cy="632.8" r="3.5"/><circle cx="948" cy="645.1" r="3"/><circle cx="911.2" cy="513.9" r="2"/><circle cx="925.4" cy="513" r="1.2"/><circle cx="1005.7" cy="502.4" r="1.2"/><circle cx="898.6" cy="509.1" r="1"/><circle cx="900" cy="562.4" r="1"/><circle cx="761.4" cy="577.1" r="1"/><circle cx="982.2" cy="591.3" r="1"/><circle cx="1011" cy="620" r="1"/><circle cx="1010.4" cy="658" r="2.5"/></g>
<!-- crosshair -->
<g transform="translate(593.7 374.8)">
<g transform="matrix(1 0 0 1 0 0)"><path d="M4 -0.8L16.3 -2.6L20 0L16.3 2.6L4 0.8Z" fill="#f04038"/><path d="M5.5 0.6H16" stroke="#d8d840" stroke-width="1.7"/><path d="M5.5 0.6H16" stroke="#189030" stroke-width="0.9"/></g><g transform="matrix(0 1 1 0 0 0)"><path d="M4 -0.8L16.3 -2.6L20 0L16.3 2.6L4 0.8Z" fill="#f04038"/><path d="M5.5 0.6H16" stroke="#d8d840" stroke-width="1.7"/><path d="M5.5 0.6H16" stroke="#189030" stroke-width="0.9"/></g><g transform="scale(-1 1)"><path d="M4 -0.8L16.3 -2.6L20 0L16.3 2.6L4 0.8Z" fill="#f04038"/><path d="M5.5 0.6H16" stroke="#d8d840" stroke-width="1.7"/><path d="M5.5 0.6H16" stroke="#189030" stroke-width="0.9"/></g><g transform="matrix(0 -1 1 0 0 0)"><path d="M4 -0.8L16.3 -2.6L20 0L16.3 2.6L4 0.8Z" fill="#f04038"/><path d="M5.5 0.6H16" stroke="#d8d840" stroke-width="1.7"/><path d="M5.5 0.6H16" stroke="#189030" stroke-width="0.9"/></g>
<circle r="2.5" fill="#fff"/>
</g>
<!-- compass -->
<rect x="159" y="89" width="29" height="28.3" fill="#000"/>
<g transform="translate(172.7 103.7)">
<circle r="11.2" fill="#000080" stroke="#b0b0c8" stroke-width="0.8"/>
<path d="M-0.8 0H11" stroke="#e85888" stroke-width="1.6"/><path d="M0 0.5V11" stroke="#c8b868" stroke-width="1.6"/>
<g fill="#30e0e0"><path d="M0 -13.4L2.2 -10.8H-2.2ZM0 13.4L2.2 10.8H-2.2ZM-13.4 0L-10.8 -2.2V2.2ZM13.4 0L10.8 -2.2V2.2Z"/></g>
</g>
<rect x="190.4" y="92" width="36.8" height="12.2" fill="#ffc0c0"/>
<rect x="228.4" y="92" width="36.6" height="12.2" fill="#808080"/>
<rect x="942" y="93" width="32.5" height="10.5" fill="#808080"/>
<rect x="975.5" y="93" width="38" height="10.5" fill="#008000"/>
</svg>
<div class="a" style="left:31.4px;top:2.5px;width:36.8px;text-align:center;font-size:10.5px;line-height:12px;color:#b01010;transform:scaleX(.84)">Field</div>
<div class="a" style="left:69.4px;top:2.5px;width:36.6px;text-align:center;font-size:10.5px;line-height:12px;color:#c0c0c0;transform:scaleX(.84)">Horizon</div>
<div class="a" style="left:783px;top:3.5px;width:32.5px;text-align:center;font-size:9px;line-height:10px;color:#e8e860">UCAC4</div>
<div class="a" style="left:816.5px;top:3.5px;width:38px;text-align:center;font-size:9px;line-height:10px;color:#d0f040">RNGCIC</div>
<div class="a" style="left:378.5px;top:41.5px;width:100px;text-align:center;font-size:9.7px;line-height:11px;color:#c8c8c8">50er und 174er</div>
</div>
<div class="a" style="left:1015.7px;top:88px;width:3.3px;height:572px;background:#f8f8f8"></div><div class="a" style="left:1018px;top:89px;width:1px;height:174px;background:#b0b0b0"></div><div class="a" style="left:1018px;top:263px;width:1px;height:396px;background:#181818"></div>
<!-- status bar -->
<div class="sl" style="left:159px">RA:</div>
<div class="sf" style="left:176px;width:15.5px"><span>17</span></div>
<div class="sf" style="left:192.5px;width:15.5px"><span>58</span></div>
<div class="sf" style="left:209.5px;width:14.5px"><span>20</span></div>
<div class="sl" style="left:229.5px">DE:</div>
<div class="sf" style="left:246.5px;width:19px"><span>-15</span></div>
<div class="sf" style="left:267.5px;width:15px"><span>26</span></div>
<div class="sf" style="left:284.5px;width:14.5px"><span>15</span></div>
<div class="sl" style="left:303.5px">Field:</div>
<div class="sf" style="left:327px;width:20px;text-align:right;padding-right:0px"><span style="transform-origin:100% 0">00</span></div>
<div class="sf" style="left:348.7px;width:15px;text-align:right;padding-right:0px"><span style="transform-origin:100% 0">17</span></div>
<div class="sf" style="left:365px;width:15.3px;text-align:right;padding-right:0px"><span style="transform-origin:100% 0">47</span></div>
<svg style="left:384px;top:664px" width="24" height="13" viewBox="0 0 24 13"><circle cx="6.4" cy="6" r="4.7" fill="#18e818" stroke="#30a030" stroke-width="0.8"/><circle cx="18" cy="6" r="4.7" fill="#18e818" stroke="#30a030" stroke-width="0.8"/><path d="M4.4 4.5L6.8 3M16 4.5L18.4 3" stroke="#b0ffb0" stroke-width="1"/></svg>
<div class="a" style="left:412.3px;top:661.3px;width:91px;height:10px;background:#f81020;color:#fff;font-weight:bold;font-size:9.3px;line-height:10px;text-align:center;white-space:nowrap">07/10/2023 01:03:47</div>
<div class="a" style="left:412px;top:672px;width:91px;text-align:center;font-size:6.5px;line-height:7px;color:#202020;white-space:nowrap">+8&deg;34'14'' / +47&deg;31'10''</div>
<svg style="left:506px;top:661px" width="16" height="16" viewBox="0 0 16 16"><circle cx="8.1" cy="8.1" r="6.9" fill="#000080"/><path d="M8.1 1.2A6.9 6.9 0 0 0 8.1 15Z" fill="#ffff80"/></svg>
<svg style="left:529px;top:660px" width="50" height="18" viewBox="0 0 50 18"><path d="M2 4H23M26 2H48M2 12.3H20M23 12.3H48" stroke="#707070" stroke-width="1" fill="none"/><path d="M2 5H23M27 3H48M2 13.3H20M24 13.3H48" stroke="#fff" stroke-width="1" fill="none"/><path d="M26 2V7.5M22.5 12V17" stroke="#606060" stroke-width="1.2"/></svg>
<div class="b" style="left:587.3px;top:662px;width:16px;height:16px;background:#c8ffc8;color:#000080;font-weight:bold;font-size:14px;line-height:13px">+</div>
<div class="b" style="left:603.6px;top:662px;width:16px;height:16px;background:#c8ffc8;color:#000080;font-weight:bold;font-size:14px;line-height:12px">&minus;</div>
<div class="a" style="left:621.2px;top:660.6px;width:73px;height:20px;background:#dcdcdc"></div>
<div class="a" style="left:622.8px;top:662.5px;color:#801818;font-size:8.5px;line-height:7.7px;white-space:nowrap;transform:scaleX(.9);transform-origin:0 0">JD: 2460135.46096<br>ST: 18:48:34</div>
<div class="f" style="left:910.2px;top:663px;width:104.3px;height:15px;background:#f0f0f0;font-size:11px;line-height:14px;color:#206020;padding-left:3px"><span>17h57m47s&nbsp; -15&deg;21'00''</span></div>
</body></html>
